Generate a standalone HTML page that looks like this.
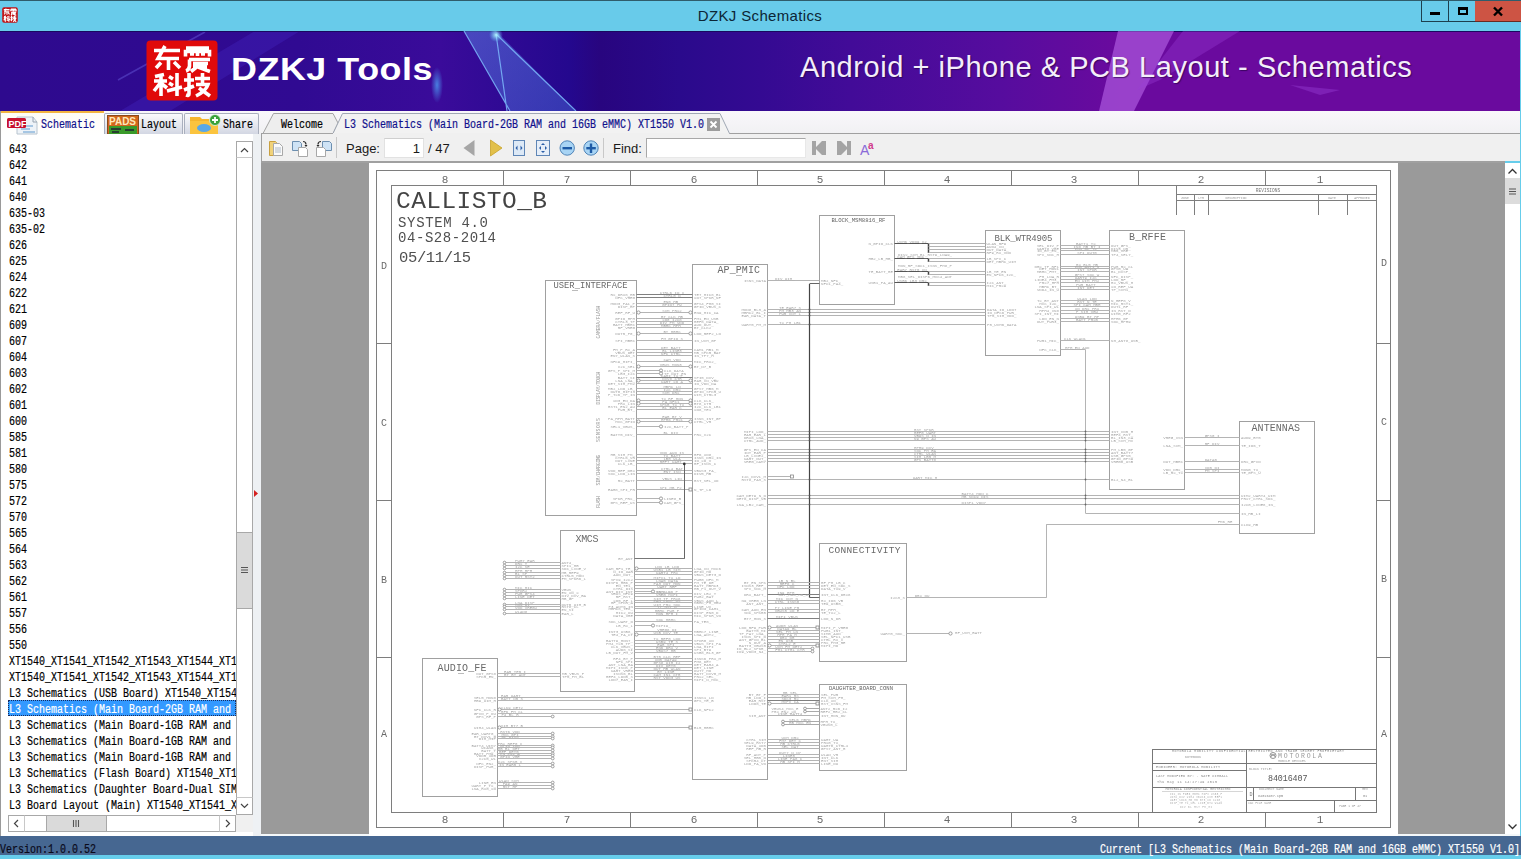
<!DOCTYPE html><html><head><meta charset="utf-8"><style>
*{margin:0;padding:0;box-sizing:border-box}
html,body{width:1521px;height:859px;overflow:hidden;background:#66cdeb;font-family:'Liberation Sans', sans-serif}
.a{position:absolute}
.mono{font-family:'Liberation Mono', monospace}
.li{position:absolute;left:9px;height:16px;line-height:16px;font-size:12px;color:#000;-webkit-text-stroke:0.2px currentColor;white-space:nowrap;font-family:'Liberation Mono', monospace;transform:scaleX(0.8333);transform-origin:0 0}
.ss{-webkit-text-stroke:0.2px currentColor;font-size:12px !important;letter-spacing:0 !important;transform:scaleX(0.8333);transform-origin:0 0}
.ssr{-webkit-text-stroke:0.2px currentColor;font-size:12px !important;letter-spacing:0 !important;transform:scaleX(0.8333);transform-origin:100% 0}
</style></head><body><div class="a" style="left:0;top:0;width:1521px;height:1px;background:#2f5c6b"></div>
<div class="a" style="left:0;top:1px;width:1521px;height:30px;background:#68cbea"></div>
<svg class="a" style="left:2px;top:7px" width="16" height="16" viewBox="0 0 72 61" preserveAspectRatio="none">
<rect x="1" y="1" width="70" height="59" rx="8" fill="#c01214"/>
<g stroke="#fff" stroke-width="5" fill="none">
<path d="M8 10.5H34M19 6L12 18.5H33M22.5 18.5V30M15 22.5L10 28M28 22L34 28"/>
<path d="M40 8H63M51.5 8V16M39.5 16.5V11.5H63.5V16.5M43 19.5H64M43.5 19.5V26Q43 30 40 31M47 23.5H62M47 27H61M52 27L64 31.5"/>
<path d="M18 34.5L9 36.5M8 41H21M15 35V56M15 42L8 51M23 36.5L27 39M23 43L27 45.5M21 51L36 47M31 33V56"/>
<path d="M38 40H48M43 33V54M38 50L48 46M49 38.5H64M56.5 33V44M50 44.5H62Q60 51 50 56M53 48L64 56"/>
</g></svg>
<div class="a" style="left:660px;top:6px;width:200px;text-align:center;font-size:15px;letter-spacing:0.35px;line-height:20px;color:#0c2636">DZKJ Schematics</div>
<div class="a" style="left:1421px;top:1px;width:28px;height:21px;border-left:1px solid #1d3f4e;border-bottom:1px solid #1d3f4e;border-right:1px solid #1d3f4e"></div>
<div class="a" style="left:1449px;top:1px;width:26px;height:21px;border-bottom:1px solid #1d3f4e"></div>
<div class="a" style="left:1430px;top:12px;width:10px;height:3px;background:#000"></div>
<div class="a" style="left:1458px;top:7px;width:10px;height:8px;border:2px solid #000;border-top-width:3px"></div>
<div class="a" style="left:1475px;top:1px;width:46px;height:21px;background:#cd5444;border-bottom:1px solid #6a2a22"></div>
<svg class="a" style="left:1492px;top:6px" width="12" height="11"><path d="M2 1.5L10 9.5M10 1.5L2 9.5" stroke="#000" stroke-width="2.4"/></svg>
<div class="a" style="left:0;top:31px;width:1520px;height:80px;overflow:hidden;
background:linear-gradient(90deg,#2e0a8e 0px,#300a92 300px,#3a0b9a 440px,#24088e 570px,#28057f 600px,#2a0a8c 680px,#340a92 760px,#420b98 850px,#560c9e 1000px,#6a0a9e 1120px,#6a0a9e 1520px)">
<svg class="a" style="left:0;top:0" width="1520" height="80" viewBox="0 31 1520 80">
<defs>
<linearGradient id="gs" x1="0" y1="0" x2="1" y2="1"><stop offset="0" stop-color="#6aa8ff" stop-opacity="0.55"/><stop offset="1" stop-color="#4f7fe8" stop-opacity="0.55"/></linearGradient>
<radialGradient id="glow"><stop offset="0" stop-color="#bff" stop-opacity="0.9"/><stop offset="1" stop-color="#6cf" stop-opacity="0"/></radialGradient>
<radialGradient id="glow2"><stop offset="0" stop-color="#4fb0ff" stop-opacity="0.7"/><stop offset="1" stop-color="#4fb0ff" stop-opacity="0"/></radialGradient>
</defs>
<polygon points="255,31 300,31 170,111 120,111" fill="#4a30d0" opacity="0.28"/>
<path d="M205 32L118 80" stroke="#6a60e0" stroke-width="1.5" opacity="0.45"/>
<polygon points="0,31 1520,31 1520,32 0,32" fill="#1a0860"/>
<polygon points="464,31 496,31 576,111 510,111" fill="url(#gs)" opacity="0.7"/>
<path d="M464 31L510 111M496 34L507 111M496 34L576 111" stroke="#7fc0ff" stroke-width="1.2" fill="none" opacity="0.8"/>
<circle cx="496" cy="35" r="7" fill="url(#glow)"/>
<ellipse cx="437" cy="85" rx="6" ry="18" fill="url(#glow2)"/>
<polygon points="1118,31 1174,31 1134,111 1099,111" fill="#c070f0" opacity="0.55"/>
<polygon points="1183,31 1240,31 1160,80 1137,90" fill="#9a40d8" opacity="0.35"/>
<polygon points="1290,85 1340,90 1320,95" fill="#9a40d8" opacity="0.4"/>
</svg>
</div>
<svg class="a" style="left:146px;top:40px" width="72" height="61" viewBox="0 0 72 61">
<rect x="0.5" y="0.5" width="71" height="60" rx="4" fill="#e00a0a"/>
<g stroke="#fff" stroke-width="3.6" fill="none" stroke-linecap="butt" stroke-linejoin="miter">
<path d="M8 10.5H34M19 6L12 18.5H33M22.5 18.5V30M15 22.5L10 28M28 22L34 28"/>
<path d="M40 8H63M51.5 8V16M39.5 16.5V11.5H63.5V16.5M44 14H48M55 14H59M43 19.5H64M43.5 19.5V26Q43 30 40 31M47 23.5H62M47 27H61M52 27L64 31.5M50 27.5L45 31.5"/>
<path d="M18 34.5L9 36.5M8 41H21M15 35V56M15 42L8 51M16 44L21 48M23 36.5L27 39M23 43L27 45.5M21 51L36 47M31 33V56"/>
<path d="M38 40H48M43 33V54Q43 56 40 55M38 50L48 46M49 38.5H64M56.5 33V44M50 44.5H62Q60 51 50 56M53 48L64 56"/>
</g>
</svg>
<div class="a" style="left:231px;top:49px;font-family:'Liberation Sans', sans-serif;font-weight:bold;font-size:32px;letter-spacing:0.5px;line-height:40px;color:#fff;white-space:nowrap;transform:scaleX(1.12);transform-origin:0 0">DZKJ Tools</div>
<div class="a" style="left:800px;top:51px;font-family:'Liberation Sans', sans-serif;font-size:29px;letter-spacing:0.55px;line-height:32px;color:#f4eefa;white-space:nowrap;text-shadow:1px 1px 1px rgba(30,0,60,0.6)">Android + iPhone &amp; PCB Layout - Schematics</div>
<div class="a" style="left:0;top:111px;width:1520px;height:23px;background:linear-gradient(#f9f7fb,#f1f1f3)"></div>
<div class="a" style="left:0;top:134px;width:261px;height:702px;background:#fff;border-left:1px solid #9a9a9a"></div>
<div class="a" style="left:1px;top:111px;width:103px;height:24px;background:linear-gradient(#fffdf6,#fff);border-top:2px solid #f3b441"></div>
<div class="a" style="left:0;top:111px;width:1px;height:725px;background:#9a9a9a"></div>
<svg class="a" style="left:6px;top:114px" width="34" height="21" viewBox="0 0 34 21">
<path d="M11 3H27L31 8V20H11Z" fill="#eef3f8" stroke="#b8c4cf" stroke-width="1"/>
<path d="M27 3V8H31" fill="none" stroke="#98a4b0"/>
<path d="M15 12H27M15 15H24M17 18H29" stroke="#8fb8dc" stroke-width="1.4"/>
<rect x="1" y="4" width="19" height="10" rx="1.5" fill="#c8102e"/>
<text x="2.5" y="12.5" font-family="Liberation Sans" font-weight="bold" font-size="9" fill="#fff">PDF</text>
</svg>
<div class="a mono ss" style="left:41px;top:117px;font-size:11px;letter-spacing:-0.55px;line-height:16px;color:#10108c;white-space:nowrap">Schematic</div>
<div class="a" style="left:104px;top:113px;width:79px;height:21px;background:linear-gradient(#fbfbfd,#d3d7e3);border:1px solid #a9afbd;border-bottom:none;border-radius:2px 2px 0 0"></div>
<svg class="a" style="left:107px;top:115px" width="32" height="19" viewBox="0 0 32 19">
<rect x="0.5" y="0.5" width="31" height="18.5" fill="#d2661c" stroke="#8a4a1a"/>
<text x="2" y="10" font-family="Liberation Sans" font-weight="bold" font-size="10" fill="#ffe8b8">PADS</text>
<rect x="2" y="11" width="28" height="8" fill="#3a9a2a"/>
<path d="M4 14H14M5 17H12M18 15H27" stroke="#223" stroke-width="1.5"/>
</svg>
<div class="a mono ss" style="left:141px;top:117px;font-size:11px;letter-spacing:-0.55px;line-height:16px;color:#000;white-space:nowrap">Layout</div>
<div class="a" style="left:184px;top:113px;width:75px;height:21px;background:linear-gradient(#fbfbfd,#d3d7e3);border:1px solid #a9afbd;border-bottom:none;border-radius:2px 2px 0 0"></div>
<svg class="a" style="left:189px;top:113px" width="34" height="21" viewBox="0 0 34 21">
<path d="M1 4H11L13 6H29V21H1Z" fill="#f5b52e"/>
<path d="M1 8H29V21H1Z" fill="#fbc43e"/>
<ellipse cx="15" cy="15" rx="7" ry="4" fill="#5aa8e6"/>
<circle cx="26" cy="7" r="5.5" fill="#3aa23a" stroke="#e8f8e8" stroke-width="0.8"/>
<path d="M26 4V10M23 7H29" stroke="#fff" stroke-width="1.8"/>
</svg>
<div class="a mono ss" style="left:223px;top:117px;font-size:11px;letter-spacing:-0.55px;line-height:16px;color:#000;white-space:nowrap">Share</div>
<svg class="a" style="left:261px;top:111px" width="1260" height="24" viewBox="261 111 1260 24">
<polygon points="263,133.5 273.5,113.5 333,113.5 338,123 333,133.5" fill="#eeeeee" stroke="#a4a4a4" stroke-width="1"/>
<polygon points="333,133.5 342.5,113.5 720,113.5 729.5,133.5" fill="#f2f2f2" stroke="#a0a8b4" stroke-width="1"/>
<line x1="729.5" y1="133.5" x2="1521" y2="133.5" stroke="#a0a0a0"/>
<line x1="261" y1="133.5" x2="263" y2="133.5" stroke="#a0a0a0"/>
<rect x="333" y="133" width="396" height="2" fill="#f0f0f0"/>
</svg>
<div class="a mono ss" style="left:281px;top:117px;font-size:11px;letter-spacing:-0.55px;line-height:16px;color:#000;white-space:nowrap">Welcome</div>
<div class="a mono ss" style="left:344px;top:117px;font-size:11px;letter-spacing:-0.55px;line-height:16px;color:#10108c;white-space:nowrap">L3 Schematics (Main Board-2GB RAM and 16GB eMMC) XT1550 V1.0</div>
<div class="a" style="left:707px;top:118px;width:13px;height:13px;background:#9c9c9c"></div>
<svg class="a" style="left:707px;top:118px" width="13" height="13"><path d="M3.5 3.5L9.5 9.5M9.5 3.5L3.5 9.5" stroke="#fff" stroke-width="1.8"/></svg>
<div class="a" style="left:261px;top:134px;width:1260px;height:27px;background:#f0f0f0;border-left:1px solid #a0a0a0"></div>
<div class="a" style="left:261px;top:161px;width:1244px;height:2px;background:#a0a0a0"></div>
<svg class="a" style="left:266px;top:137px" width="350" height="22" viewBox="266 137 350 22">
<!-- open -->
<path d="M269.5 141.5h6l1 1v13h-7z" fill="#f0d27a" stroke="#c9a040"/>
<path d="M273.5 143.5h6l3 3v9h-9z" fill="#fafafa" stroke="#a8a8a8"/>
<path d="M275 148h6M275 150h6M275 152h6" stroke="#9ab" stroke-width="0.8"/>
<!-- save as / copy -->
<path d="M292.5 141.5h7l2 2v7h-9z" fill="#cfe3f5" stroke="#6d8fb0"/>
<path d="M298.5 147.5h7l2 2v7h-9z" fill="#fff" stroke="#a8a8a8"/>
<path d="M303 141.5q3 0 3 3" fill="none" stroke="#333" stroke-width="1.2"/><path d="M304.5 145l1.5 2 1.5-2z" fill="#222"/>
<path d="M322.5 141.5h7l2 2v7h-9z" fill="#cfe3f5" stroke="#6d8fb0"/>
<path d="M316.5 147.5h7l2 2v7h-9z" fill="#fff" stroke="#a8a8a8"/>
<path d="M321 141.5q-3 0 -3 3" fill="none" stroke="#333" stroke-width="1.2"/><path d="M316.5 145l1.5 2 1.5-2z" fill="#222"/>
<line x1="336.5" y1="137" x2="336.5" y2="158" stroke="#c8c8c8"/>
</svg>
<div class="a" style="left:346px;top:141px;font-size:13px;line-height:16px;color:#1a1a1a">Page:</div>
<div class="a" style="left:384px;top:138px;width:40px;height:20px;background:#fff;border:1px solid #e2e2e2;border-top-color:#cfcfcf"></div>
<div class="a" style="left:384px;top:141px;width:36px;text-align:right;font-size:13px;line-height:16px;color:#1a1a1a">1</div>
<div class="a" style="left:428px;top:141px;font-size:13px;line-height:16px;color:#1a1a1a">/ 47</div>
<svg class="a" style="left:455px;top:136px" width="430" height="24" viewBox="455 136 430 24">
<polygon points="474.5,140 463.5,148 474.5,156" fill="#a6a6a6"/>
<polygon points="490.5,140 502,148 490.5,156" fill="#e2c04a" stroke="#c8a22a" stroke-width="0.8"/>
<rect x="513.5" y="140.5" width="11" height="15" fill="#dde9f6" stroke="#5f86b6"/>
<path d="M517.5 145.5l-2 2.5 2 2.5zM520.5 145.5l2 2.5-2 2.5z" fill="#2a5ea8"/>
<rect x="536.5" y="140.5" width="13" height="15" fill="#e6eef8" stroke="#5f86b6"/>
<path d="M543 143l-2 2h4zM543 153l-2-2h4zM539 148l2-2v4zM547 148l-2-2v4z" fill="#2a5ea8"/>
<circle cx="567.2" cy="148" r="7.2" fill="#a8d4f4" stroke="#4f84b8"/>
<rect x="562.5" y="147" width="9.5" height="2.4" fill="#1d5aa6"/>
<circle cx="591" cy="148" r="7.2" fill="#a8d4f4" stroke="#4f84b8"/>
<rect x="586.3" y="147" width="9.5" height="2.4" fill="#1d5aa6"/><rect x="589.8" y="143.5" width="2.4" height="9.5" fill="#1d5aa6"/>
<line x1="603.5" y1="138" x2="603.5" y2="158" stroke="#c8c8c8"/>
<path d="M812 141h4v6l6-6h4v14h-4l-6-6v6h-4z" fill="#a4a4a4"/>
<path d="M837 141h4l6 6v-6h4v14h-4v-6l-6 6h-4z" fill="#a4a4a4"/>
<text x="860" y="155" font-family="Liberation Sans" font-size="14" fill="#8a6ad8">A</text>
<text x="868" y="149" font-family="Liberation Sans" font-size="10" font-weight="bold" fill="#d03c8c">a</text>
</svg>
<div class="a" style="left:613px;top:141px;font-size:13px;line-height:16px;color:#1a1a1a">Find:</div>
<div class="a" style="left:646px;top:138px;width:160px;height:20px;background:#fff;border:1px solid #e8e8e8;border-top:1px solid #a8a8a8;border-left:1px solid #a8a8a8"></div>
<div class="a" style="left:261px;top:163px;width:1244px;height:671px;background:#9a9a9a"></div>
<div class="a" style="left:261px;top:834px;width:1260px;height:2px;background:#f4f8fa"></div>
<div class="a" style="left:369px;top:163px;width:1029px;height:673px;background:#fff"></div>
<div class="a" style="left:1505px;top:163px;width:15px;height:671px;background:#fff"></div>
<svg class="a" style="left:1505px;top:163px" width="15" height="671"><path d="M3.5 10.5L7.5 6.5L11.5 10.5" stroke="#333" stroke-width="1.3" fill="none"/><rect x="0" y="15" width="15" height="26" fill="#dcdcdc"/><path d="M4 26h7M4 28.5h7M4 31h7" stroke="#555" stroke-width="1.2"/><path d="M3.5 661.5L7.5 665.5L11.5 661.5" stroke="#333" stroke-width="1.3" fill="none"/></svg>
<div class="a" style="left:1520px;top:111px;width:1px;height:748px;background:#66cdeb"></div>
<div class="a" style="left:1px;top:141px;width:235px;height:674px;overflow:hidden">
<div class="li" style="left:8px;top:1px">643</div>
<div class="li" style="left:8px;top:17px">642</div>
<div class="li" style="left:8px;top:33px">641</div>
<div class="li" style="left:8px;top:49px">640</div>
<div class="li" style="left:8px;top:65px">635-03</div>
<div class="li" style="left:8px;top:81px">635-02</div>
<div class="li" style="left:8px;top:97px">626</div>
<div class="li" style="left:8px;top:113px">625</div>
<div class="li" style="left:8px;top:129px">624</div>
<div class="li" style="left:8px;top:145px">622</div>
<div class="li" style="left:8px;top:161px">621</div>
<div class="li" style="left:8px;top:177px">609</div>
<div class="li" style="left:8px;top:193px">607</div>
<div class="li" style="left:8px;top:209px">604</div>
<div class="li" style="left:8px;top:225px">603</div>
<div class="li" style="left:8px;top:241px">602</div>
<div class="li" style="left:8px;top:257px">601</div>
<div class="li" style="left:8px;top:273px">600</div>
<div class="li" style="left:8px;top:289px">585</div>
<div class="li" style="left:8px;top:305px">581</div>
<div class="li" style="left:8px;top:321px">580</div>
<div class="li" style="left:8px;top:337px">575</div>
<div class="li" style="left:8px;top:353px">572</div>
<div class="li" style="left:8px;top:369px">570</div>
<div class="li" style="left:8px;top:385px">565</div>
<div class="li" style="left:8px;top:401px">564</div>
<div class="li" style="left:8px;top:417px">563</div>
<div class="li" style="left:8px;top:433px">562</div>
<div class="li" style="left:8px;top:449px">561</div>
<div class="li" style="left:8px;top:465px">557</div>
<div class="li" style="left:8px;top:481px">556</div>
<div class="li" style="left:8px;top:497px">550</div>
<div class="li" style="left:8px;top:513px">XT1540_XT1541_XT1542_XT1543_XT1544_XT1548_XT1550</div>
<div class="li" style="left:8px;top:529px">XT1540_XT1541_XT1542_XT1543_XT1544_XT1548_XT1550</div>
<div class="li" style="left:8px;top:545px">L3 Schematics (USB Board) XT1540_XT1541_XT1542</div>
<div class="a" style="left:7px;top:559px;width:228px;height:16px;background:#3399ff;border:1px dotted #1a2a5a"></div>
<div class="li" style="left:8px;top:561px;color:#fff">L3 Schematics (Main Board-2GB RAM and 16GB eMMC) XT1550 V1.0</div>
<div class="li" style="left:8px;top:577px">L3 Schematics (Main Board-1GB RAM and 8GB eMMC)</div>
<div class="li" style="left:8px;top:593px">L3 Schematics (Main Board-1GB RAM and 8GB eMMC)</div>
<div class="li" style="left:8px;top:609px">L3 Schematics (Main Board-1GB RAM and 8GB eMMC)</div>
<div class="li" style="left:8px;top:625px">L3 Schematics (Flash Board) XT1540_XT1541</div>
<div class="li" style="left:8px;top:641px">L3 Schematics (Daughter Board-Dual SIM) XT1540</div>
<div class="li" style="left:8px;top:657px">L3 Board Layout (Main) XT1540_XT1541_XT1542</div>
</div>
<svg class="a" style="left:236px;top:141px" width="17" height="691" viewBox="236 141 17 691">
<rect x="236.5" y="141.5" width="16" height="673" fill="#fff" stroke="#a8a8a8"/>
<line x1="236.5" y1="157.5" x2="252.5" y2="157.5" stroke="#c8c8c8"/>
<path d="M241 152l3.5-3.5 3.5 3.5" stroke="#444" stroke-width="1.2" fill="none"/>
<rect x="236.5" y="532.5" width="16" height="76" fill="#dadada" stroke="#a8a8a8"/>
<path d="M241 567.5h7M241 570h7M241 572.5h7" stroke="#555" stroke-width="1.1"/>
<line x1="236.5" y1="797.5" x2="252.5" y2="797.5" stroke="#c8c8c8"/>
<path d="M241 804l3.5 3.5 3.5-3.5" stroke="#444" stroke-width="1.2" fill="none"/>
<rect x="236" y="815" width="17" height="17" fill="#f0f0f0"/>
</svg>
<svg class="a" style="left:7px;top:815px" width="230" height="18" viewBox="7 815 230 18">
<rect x="8.5" y="815.5" width="227" height="16" fill="#fff" stroke="#a8a8a8"/>
<line x1="24.5" y1="815.5" x2="24.5" y2="831.5" stroke="#c8c8c8"/>
<path d="M18 820l-3.5 3.5 3.5 3.5" stroke="#444" stroke-width="1.2" fill="none"/>
<rect x="46.5" y="815.5" width="60" height="16" fill="#dadada" stroke="#a8a8a8"/>
<path d="M73.5 820v7M76 820v7M78.5 820v7" stroke="#555" stroke-width="1.1"/>
<line x1="219.5" y1="815.5" x2="219.5" y2="831.5" stroke="#c8c8c8"/>
<path d="M226 820l3.5 3.5-3.5 3.5" stroke="#444" stroke-width="1.2" fill="none"/>
</svg>
<div class="a" style="left:253px;top:134px;width:8px;height:702px;background:#eef1f4"></div>
<svg class="a" style="left:253px;top:488px" width="8" height="12"><polygon points="1,2 5,5.5 1,9" fill="#d42020"/></svg>
<div class="a" style="left:0;top:836px;width:1521px;height:19px;background:#466791"></div>
<div class="a" style="left:0;top:855px;width:1521px;height:4px;background:#66cdeb"></div>
<div class="a mono ss" style="left:0;top:842px;font-size:11px;letter-spacing:-0.55px;line-height:16px;color:#0a0a1a;white-space:nowrap">Version:1.0.0.52</div>
<div class="a mono ssr" style="right:1px;top:842px;font-size:11px;letter-spacing:-0.55px;line-height:16px;color:#fff;white-space:nowrap">Current [L3 Schematics (Main Board-2GB RAM and 16GB eMMC) XT1550 V1.0]</div>
<svg class="a" style="left:369px;top:163px;will-change:transform" width="1029" height="673" viewBox="369 163 1029 673" font-family="Liberation Mono, monospace">
<rect x="376.5" y="170.5" width="1014" height="657" fill="none" stroke="#7e7e7e"/>
<rect x="391.5" y="185.5" width="985" height="627" fill="none" stroke="#7e7e7e"/>
<line x1="503.5" y1="170.5" x2="503.5" y2="185.5" stroke="#7e7e7e" stroke-width="1"/>
<line x1="503.5" y1="812.5" x2="503.5" y2="827.5" stroke="#7e7e7e" stroke-width="1"/>
<line x1="630.5" y1="170.5" x2="630.5" y2="185.5" stroke="#7e7e7e" stroke-width="1"/>
<line x1="630.5" y1="812.5" x2="630.5" y2="827.5" stroke="#7e7e7e" stroke-width="1"/>
<line x1="757.5" y1="170.5" x2="757.5" y2="185.5" stroke="#7e7e7e" stroke-width="1"/>
<line x1="757.5" y1="812.5" x2="757.5" y2="827.5" stroke="#7e7e7e" stroke-width="1"/>
<line x1="884.5" y1="170.5" x2="884.5" y2="185.5" stroke="#7e7e7e" stroke-width="1"/>
<line x1="884.5" y1="812.5" x2="884.5" y2="827.5" stroke="#7e7e7e" stroke-width="1"/>
<line x1="1011.5" y1="170.5" x2="1011.5" y2="185.5" stroke="#7e7e7e" stroke-width="1"/>
<line x1="1011.5" y1="812.5" x2="1011.5" y2="827.5" stroke="#7e7e7e" stroke-width="1"/>
<line x1="1138.5" y1="170.5" x2="1138.5" y2="185.5" stroke="#7e7e7e" stroke-width="1"/>
<line x1="1138.5" y1="812.5" x2="1138.5" y2="827.5" stroke="#7e7e7e" stroke-width="1"/>
<line x1="1265.5" y1="170.5" x2="1265.5" y2="185.5" stroke="#7e7e7e" stroke-width="1"/>
<line x1="1265.5" y1="812.5" x2="1265.5" y2="827.5" stroke="#7e7e7e" stroke-width="1"/>
<line x1="376.5" y1="343.5" x2="391.5" y2="343.5" stroke="#7e7e7e" stroke-width="1"/>
<line x1="1376.5" y1="343.5" x2="1390.5" y2="343.5" stroke="#7e7e7e" stroke-width="1"/>
<line x1="376.5" y1="500.5" x2="391.5" y2="500.5" stroke="#7e7e7e" stroke-width="1"/>
<line x1="1376.5" y1="500.5" x2="1390.5" y2="500.5" stroke="#7e7e7e" stroke-width="1"/>
<line x1="376.5" y1="657.5" x2="391.5" y2="657.5" stroke="#7e7e7e" stroke-width="1"/>
<line x1="1376.5" y1="657.5" x2="1390.5" y2="657.5" stroke="#7e7e7e" stroke-width="1"/>
<text x="445" y="183" font-size="11" fill="#6a6a6a" text-anchor="middle" >8</text>
<text x="445" y="823" font-size="11" fill="#6a6a6a" text-anchor="middle" >8</text>
<text x="567" y="183" font-size="11" fill="#6a6a6a" text-anchor="middle" >7</text>
<text x="567" y="823" font-size="11" fill="#6a6a6a" text-anchor="middle" >7</text>
<text x="694" y="183" font-size="11" fill="#6a6a6a" text-anchor="middle" >6</text>
<text x="694" y="823" font-size="11" fill="#6a6a6a" text-anchor="middle" >6</text>
<text x="820" y="183" font-size="11" fill="#6a6a6a" text-anchor="middle" >5</text>
<text x="820" y="823" font-size="11" fill="#6a6a6a" text-anchor="middle" >5</text>
<text x="947" y="183" font-size="11" fill="#6a6a6a" text-anchor="middle" >4</text>
<text x="947" y="823" font-size="11" fill="#6a6a6a" text-anchor="middle" >4</text>
<text x="1074" y="183" font-size="11" fill="#6a6a6a" text-anchor="middle" >3</text>
<text x="1074" y="823" font-size="11" fill="#6a6a6a" text-anchor="middle" >3</text>
<text x="1201" y="183" font-size="11" fill="#6a6a6a" text-anchor="middle" >2</text>
<text x="1201" y="823" font-size="11" fill="#6a6a6a" text-anchor="middle" >2</text>
<text x="1320" y="183" font-size="11" fill="#6a6a6a" text-anchor="middle" >1</text>
<text x="1320" y="823" font-size="11" fill="#6a6a6a" text-anchor="middle" >1</text>
<text x="384" y="269" font-size="10" fill="#6a6a6a" text-anchor="middle" >D</text>
<text x="1384" y="266" font-size="10" fill="#6a6a6a" text-anchor="middle" >D</text>
<text x="384" y="426" font-size="10" fill="#6a6a6a" text-anchor="middle" >C</text>
<text x="1384" y="425" font-size="10" fill="#6a6a6a" text-anchor="middle" >C</text>
<text x="384" y="583" font-size="10" fill="#6a6a6a" text-anchor="middle" >B</text>
<text x="1384" y="582" font-size="10" fill="#6a6a6a" text-anchor="middle" >B</text>
<text x="384" y="737" font-size="10" fill="#6a6a6a" text-anchor="middle" >A</text>
<text x="1384" y="737" font-size="10" fill="#6a6a6a" text-anchor="middle" >A</text>
<text x="396" y="208" font-size="24.5" fill="#444" text-anchor="start" textLength="151">CALLISTO_B</text>
<text x="398" y="227" font-size="14" fill="#505050" text-anchor="start" textLength="90">SYSTEM 4.0</text>
<text x="398" y="242" font-size="14" fill="#505050" text-anchor="start" textLength="98">04-S28-2014</text>
<text x="399" y="262" font-size="15.5" fill="#505050" text-anchor="start" textLength="72">05/11/15</text>
<line x1="1176.5" y1="185.5" x2="1376.5" y2="185.5" stroke="#7e7e7e" stroke-width="1"/>
<line x1="1176.5" y1="185.5" x2="1176.5" y2="215" stroke="#7e7e7e" stroke-width="1"/>
<line x1="1176.5" y1="194.5" x2="1376.5" y2="194.5" stroke="#7e7e7e" stroke-width="1"/>
<line x1="1176.5" y1="200.5" x2="1376.5" y2="200.5" stroke="#7e7e7e" stroke-width="1"/>
<line x1="1194.5" y1="194.5" x2="1194.5" y2="215" stroke="#7e7e7e" stroke-width="1"/>
<line x1="1208.5" y1="194.5" x2="1208.5" y2="215" stroke="#7e7e7e" stroke-width="1"/>
<line x1="1318.5" y1="194.5" x2="1318.5" y2="215" stroke="#7e7e7e" stroke-width="1"/>
<line x1="1347.5" y1="194.5" x2="1347.5" y2="215" stroke="#7e7e7e" stroke-width="1"/>
<text x="1268" y="192" font-size="4.5" fill="#777" text-anchor="middle" >REVISIONS</text>
<text x="1185" y="199" font-size="3.2" fill="#999" text-anchor="middle" >ZONE</text>
<text x="1201" y="199" font-size="3.2" fill="#999" text-anchor="middle" >LTR</text>
<text x="1236" y="199" font-size="3.2" fill="#999" text-anchor="middle" >DESCRIPTION</text>
<text x="1332" y="199" font-size="3.2" fill="#999" text-anchor="middle" >DATE</text>
<text x="1362" y="199" font-size="3.2" fill="#999" text-anchor="middle" >APPROVED</text>
<rect x="545.5" y="280.5" width="91" height="235" fill="none" stroke="#a0a0a0"/>
<text x="553.5" y="288" font-size="8.8" fill="#6a6a6a" text-anchor="start" textLength="74">USER_INTERFACE</text>
<rect x="692.5" y="264.5" width="75" height="515" fill="none" stroke="#a0a0a0"/>
<text x="717.5" y="273" font-size="10" fill="#6a6a6a" text-anchor="start" textLength="42.5">AP_PMIC</text>
<rect x="819.5" y="215.5" width="75" height="89" fill="none" stroke="#a0a0a0"/>
<text x="831.5" y="222" font-size="5.7" fill="#666" text-anchor="start" textLength="54">BLOCK_MSM8816_RF</text>
<rect x="985.5" y="230.5" width="75" height="125" fill="none" stroke="#a0a0a0"/>
<text x="994.5" y="241" font-size="9" fill="#6a6a6a" text-anchor="start" textLength="58">BLK_WTR4905</text>
<rect x="1109.5" y="230.5" width="75" height="259" fill="none" stroke="#a0a0a0"/>
<text x="1129" y="239.5" font-size="10" fill="#6a6a6a" text-anchor="start" textLength="37">B_RFFE</text>
<rect x="1239.5" y="421.5" width="75" height="112" fill="none" stroke="#a0a0a0"/>
<text x="1251.5" y="431.2" font-size="10" fill="#6a6a6a" text-anchor="start" textLength="48.5">ANTENNAS</text>
<rect x="560.5" y="530.5" width="74" height="161" fill="none" stroke="#a0a0a0"/>
<text x="575.5" y="541.5" font-size="10" fill="#6a6a6a" text-anchor="start" textLength="23">XMCS</text>
<rect x="422.5" y="658.5" width="75" height="138" fill="none" stroke="#a0a0a0"/>
<text x="437.5" y="671.2" font-size="10" fill="#6a6a6a" text-anchor="start" textLength="49">AUDIO_FE</text>
<rect x="819.5" y="543.5" width="87" height="118" fill="none" stroke="#a0a0a0"/>
<text x="828.5" y="553.2" font-size="9.5" fill="#6a6a6a" text-anchor="start" textLength="72">CONNECTIVITY</text>
<rect x="819.5" y="684.5" width="87" height="86" fill="none" stroke="#a0a0a0"/>
<text x="829" y="690" font-size="5.6" fill="#666" text-anchor="start" textLength="64">DAUGHTER_BOARD_CONN</text>
<line x1="572" y1="290.5" x2="578" y2="290.5" stroke="#bbb" stroke-width="1"/>
<line x1="736" y1="275.5" x2="742" y2="275.5" stroke="#bbb" stroke-width="1"/>
<line x1="458" y1="673.5" x2="464" y2="673.5" stroke="#bbb" stroke-width="1"/>
<text x="0" y="0" font-size="4.8" fill="#999" text-anchor="middle" textLength="33" transform="translate(600,322) rotate(-90)">CAMERA/FLASH</text>
<text x="0" y="0" font-size="4.8" fill="#999" text-anchor="middle" textLength="33" transform="translate(600,388) rotate(-90)">DISPLAY/TOUCH</text>
<text x="0" y="0" font-size="4.8" fill="#999" text-anchor="middle" textLength="24" transform="translate(600,430) rotate(-90)">SENSORS</text>
<text x="0" y="0" font-size="4.8" fill="#999" text-anchor="middle" textLength="31" transform="translate(600,470) rotate(-90)">SIM/CHARGING</text>
<text x="0" y="0" font-size="4.8" fill="#999" text-anchor="middle" textLength="12" transform="translate(600,502) rotate(-90)">FLASH</text>
<line x1="636.5" y1="294.5" x2="692.5" y2="294.5" stroke="#808080" stroke-width="1.1"/>
<text x="635.0" y="295.7" font-size="4.1" fill="#a6a6a6" text-anchor="end" >RX_DRX8_HB</text>
<text x="694.0" y="295.7" font-size="4.1" fill="#a6a6a6" text-anchor="start" >TE7_MIC8_BL</text>
<text x="672" y="293.7" font-size="4.1" fill="#a6a6a6" text-anchor="middle" >CTRL6_IO_I</text>
<line x1="636.5" y1="297.5" x2="692.5" y2="297.5" stroke="#808080" stroke-width="1.1"/>
<text x="635.0" y="298.7" font-size="4.1" fill="#a6a6a6" text-anchor="end" >NFC_VREG</text>
<text x="694.0" y="298.7" font-size="4.1" fill="#a6a6a6" text-anchor="start" >XO7_SPKR_NF</text>
<text x="672" y="296.7" font-size="4.1" fill="#a6a6a6" text-anchor="middle" >CTRL0_D</text>
<line x1="636.5" y1="303.5" x2="692.5" y2="303.5" stroke="#b4b4b4" stroke-width="1"/>
<text x="635.0" y="304.7" font-size="4.1" fill="#a6a6a6" text-anchor="end" >MON3_PA1_P</text>
<text x="694.0" y="304.7" font-size="4.1" fill="#a6a6a6" text-anchor="start" >GPS4_FM0_SI</text>
<text x="672" y="302.7" font-size="4.1" fill="#a6a6a6" text-anchor="middle" >EN0_HB_</text>
<line x1="636.5" y1="306.5" x2="692.5" y2="306.5" stroke="#b4b4b4" stroke-width="1"/>
<text x="635.0" y="307.7" font-size="4.1" fill="#a6a6a6" text-anchor="end" >DISP_HP</text>
<text x="694.0" y="307.7" font-size="4.1" fill="#a6a6a6" text-anchor="start" >GPIO_VBUS_C</text>
<text x="672" y="305.7" font-size="4.1" fill="#a6a6a6" text-anchor="middle" >GPIO7_PW</text>
<line x1="636.5" y1="312.5" x2="692.5" y2="312.5" stroke="#b4b4b4" stroke-width="1"/>
<text x="635.0" y="313.7" font-size="4.1" fill="#a6a6a6" text-anchor="end" >REF_RF_U</text>
<text x="694.0" y="313.7" font-size="4.1" fill="#a6a6a6" text-anchor="start" >EN9_MIC_CA</text>
<text x="672" y="311.7" font-size="4.1" fill="#a6a6a6" text-anchor="middle" >SIM_PRX2</text>
<circle cx="638.5" cy="312.5" r="1.6" fill="#fff" stroke="#888" stroke-width="0.8"/>
<circle cx="690.5" cy="312.5" r="1.6" fill="#fff" stroke="#888" stroke-width="0.8"/>
<line x1="636.5" y1="318.5" x2="692.5" y2="318.5" stroke="#b4b4b4" stroke-width="1"/>
<text x="635.0" y="319.7" font-size="4.1" fill="#a6a6a6" text-anchor="end" >GPIO_HPH</text>
<text x="694.0" y="319.7" font-size="4.1" fill="#a6a6a6" text-anchor="start" >FM1_EN_USB</text>
<text x="672" y="317.7" font-size="4.1" fill="#a6a6a6" text-anchor="middle" >BT_CLK_HB</text>
<line x1="636.5" y1="321.5" x2="692.5" y2="321.5" stroke="#b4b4b4" stroke-width="1"/>
<text x="635.0" y="322.7" font-size="4.1" fill="#a6a6a6" text-anchor="end" >CTRL3_TP</text>
<text x="694.0" y="322.7" font-size="4.1" fill="#a6a6a6" text-anchor="start" >REF8_DATA_</text>
<text x="672" y="320.7" font-size="4.1" fill="#a6a6a6" text-anchor="middle" >XO0_I2C8</text>
<line x1="636.5" y1="324.5" x2="692.5" y2="324.5" stroke="#b4b4b4" stroke-width="1"/>
<text x="635.0" y="325.7" font-size="4.1" fill="#a6a6a6" text-anchor="end" >BATT_MBHC</text>
<text x="694.0" y="325.7" font-size="4.1" fill="#a6a6a6" text-anchor="start" >AUD_OUT_</text>
<text x="672" y="323.7" font-size="4.1" fill="#a6a6a6" text-anchor="middle" >DIV_PM_VDD</text>
<line x1="636.5" y1="327.5" x2="692.5" y2="327.5" stroke="#b4b4b4" stroke-width="1"/>
<text x="635.0" y="328.7" font-size="4.1" fill="#a6a6a6" text-anchor="end" >RF_VREG</text>
<text x="694.0" y="328.7" font-size="4.1" fill="#a6a6a6" text-anchor="start" >BT_CLK2</text>
<text x="672" y="326.7" font-size="4.1" fill="#a6a6a6" text-anchor="middle" >MBHC_HPH_</text>
<line x1="636.5" y1="333.5" x2="692.5" y2="333.5" stroke="#b4b4b4" stroke-width="1"/>
<text x="635.0" y="334.7" font-size="4.1" fill="#a6a6a6" text-anchor="end" >OUT5_P0_</text>
<text x="694.0" y="334.7" font-size="4.1" fill="#a6a6a6" text-anchor="start" >LDO_REF2_LD</text>
<text x="672" y="332.7" font-size="4.1" fill="#a6a6a6" text-anchor="middle" >BT_MBHC</text>
<circle cx="638.5" cy="333.5" r="1.6" fill="#fff" stroke="#888" stroke-width="0.8"/>
<circle cx="690.5" cy="333.5" r="1.6" fill="#fff" stroke="#888" stroke-width="0.8"/>
<line x1="636.5" y1="340.5" x2="692.5" y2="340.5" stroke="#b4b4b4" stroke-width="1"/>
<text x="635.0" y="341.7" font-size="4.1" fill="#a6a6a6" text-anchor="end" >SPI_MBHC</text>
<text x="694.0" y="341.7" font-size="4.1" fill="#a6a6a6" text-anchor="start" >IN_UIM_GP</text>
<text x="672" y="339.7" font-size="4.1" fill="#a6a6a6" text-anchor="middle" >FM_GPIO_S</text>
<line x1="636.5" y1="349.5" x2="692.5" y2="349.5" stroke="#b4b4b4" stroke-width="1"/>
<text x="635.0" y="350.7" font-size="4.1" fill="#a6a6a6" text-anchor="end" >FM_P_RX_A</text>
<text x="694.0" y="350.7" font-size="4.1" fill="#a6a6a6" text-anchor="start" >CAM1_HB1_M</text>
<text x="672" y="348.7" font-size="4.1" fill="#a6a6a6" text-anchor="middle" >DET_BATT_</text>
<line x1="636.5" y1="352.5" x2="692.5" y2="352.5" stroke="#b4b4b4" stroke-width="1"/>
<text x="635.0" y="353.7" font-size="4.1" fill="#a6a6a6" text-anchor="end" >VBUS_DET</text>
<text x="694.0" y="353.7" font-size="4.1" fill="#a6a6a6" text-anchor="start" >MB_SPKR_BAT</text>
<text x="672" y="351.7" font-size="4.1" fill="#a6a6a6" text-anchor="middle" >BL_LINE3</text>
<line x1="636.5" y1="355.5" x2="692.5" y2="355.5" stroke="#b4b4b4" stroke-width="1"/>
<text x="635.0" y="356.7" font-size="4.1" fill="#a6a6a6" text-anchor="end" >EN7_WLAN_S</text>
<text x="694.0" y="356.7" font-size="4.1" fill="#a6a6a6" text-anchor="start" >IN_TP7_H</text>
<text x="672" y="354.7" font-size="4.1" fill="#a6a6a6" text-anchor="middle" >NFC_CTRL_</text>
<line x1="636.5" y1="361.5" x2="692.5" y2="361.5" stroke="#b4b4b4" stroke-width="1"/>
<text x="635.0" y="362.7" font-size="4.1" fill="#a6a6a6" text-anchor="end" >NFC9_MIPI_</text>
<text x="694.0" y="362.7" font-size="4.1" fill="#a6a6a6" text-anchor="start" >MIC_PRX2_</text>
<text x="672" y="360.7" font-size="4.1" fill="#a6a6a6" text-anchor="middle" >CAM_VDD</text>
<line x1="636.5" y1="366.5" x2="692.5" y2="366.5" stroke="#b4b4b4" stroke-width="1"/>
<text x="635.0" y="367.7" font-size="4.1" fill="#a6a6a6" text-anchor="end" >I2C_SEL</text>
<text x="694.0" y="367.7" font-size="4.1" fill="#a6a6a6" text-anchor="start" >BT_N7_B</text>
<text x="672" y="365.7" font-size="4.1" fill="#a6a6a6" text-anchor="middle" >VBUS_MON3_</text>
<circle cx="638.5" cy="366.5" r="1.6" fill="#fff" stroke="#888" stroke-width="0.8"/>
<circle cx="690.5" cy="366.5" r="1.6" fill="#fff" stroke="#888" stroke-width="0.8"/>
<line x1="636.5" y1="370.5" x2="660" y2="370.5" stroke="#b4b4b4" stroke-width="1"/>
<text x="635.0" y="371.7" font-size="4.1" fill="#a6a6a6" text-anchor="end" >GPS_P_SPI_M</text>
<circle cx="661" cy="370.5" r="1.6" fill="#fff" stroke="#888" stroke-width="0.8"/>
<text x="664" y="371.7" font-size="4.1" fill="#a6a6a6" text-anchor="start" >CLK_DATA</text>
<line x1="636.5" y1="373.5" x2="660" y2="373.5" stroke="#b4b4b4" stroke-width="1"/>
<text x="635.0" y="374.7" font-size="4.1" fill="#a6a6a6" text-anchor="end" >LB3_I2C</text>
<circle cx="661" cy="373.5" r="1.6" fill="#fff" stroke="#888" stroke-width="0.8"/>
<text x="664" y="374.7" font-size="4.1" fill="#a6a6a6" text-anchor="start" >TP_OUT_EN</text>
<line x1="636.5" y1="377.5" x2="692.5" y2="377.5" stroke="#808080" stroke-width="1.1"/>
<text x="635.0" y="378.7" font-size="4.1" fill="#a6a6a6" text-anchor="end" >BATT_SI</text>
<text x="694.0" y="378.7" font-size="4.1" fill="#a6a6a6" text-anchor="start" >SPI5_DIV_</text>
<text x="672" y="376.7" font-size="4.1" fill="#a6a6a6" text-anchor="middle" >CAM1_TX_P</text>
<line x1="636.5" y1="380.5" x2="692.5" y2="380.5" stroke="#b4b4b4" stroke-width="1"/>
<text x="635.0" y="381.7" font-size="4.1" fill="#a6a6a6" text-anchor="end" >LNA_LNA_</text>
<text x="694.0" y="381.7" font-size="4.1" fill="#a6a6a6" text-anchor="start" >EAR_IN_VBU</text>
<text x="672" y="379.7" font-size="4.1" fill="#a6a6a6" text-anchor="middle" >DIV8_CTR</text>
<circle cx="638.5" cy="380.5" r="1.6" fill="#fff" stroke="#888" stroke-width="0.8"/>
<circle cx="690.5" cy="380.5" r="1.6" fill="#fff" stroke="#888" stroke-width="0.8"/>
<line x1="636.5" y1="383.5" x2="692.5" y2="383.5" stroke="#b4b4b4" stroke-width="1"/>
<text x="635.0" y="384.7" font-size="4.1" fill="#a6a6a6" text-anchor="end" >DET_SIM_PM2</text>
<text x="694.0" y="384.7" font-size="4.1" fill="#a6a6a6" text-anchor="start" >IO_VDD_DA</text>
<text x="672" y="382.7" font-size="4.1" fill="#a6a6a6" text-anchor="middle" >UART_XO_A</text>
<line x1="636.5" y1="388.5" x2="692.5" y2="388.5" stroke="#b4b4b4" stroke-width="1"/>
<text x="635.0" y="389.7" font-size="4.1" fill="#a6a6a6" text-anchor="end" >MB2_LDO_LB_</text>
<text x="694.0" y="389.7" font-size="4.1" fill="#a6a6a6" text-anchor="start" >GPS7_MB6_M</text>
<text x="672" y="387.7" font-size="4.1" fill="#a6a6a6" text-anchor="middle" >MBHC_LN</text>
<line x1="636.5" y1="391.5" x2="692.5" y2="391.5" stroke="#b4b4b4" stroke-width="1"/>
<text x="635.0" y="392.7" font-size="4.1" fill="#a6a6a6" text-anchor="end" >OUT0_MIPI3</text>
<text x="694.0" y="392.7" font-size="4.1" fill="#a6a6a6" text-anchor="start" >GPIO_SPKR_U</text>
<text x="672" y="390.7" font-size="4.1" fill="#a6a6a6" text-anchor="middle" >I2C_DRX</text>
<line x1="636.5" y1="394.5" x2="692.5" y2="394.5" stroke="#b4b4b4" stroke-width="1"/>
<text x="635.0" y="395.7" font-size="4.1" fill="#a6a6a6" text-anchor="end" >P_TX6_TP_IN</text>
<text x="694.0" y="395.7" font-size="4.1" fill="#a6a6a6" text-anchor="start" >UIM_CTRL3</text>
<text x="672" y="393.7" font-size="4.1" fill="#a6a6a6" text-anchor="middle" >SIM_DRX_</text>
<line x1="636.5" y1="400.5" x2="692.5" y2="400.5" stroke="#b4b4b4" stroke-width="1"/>
<text x="635.0" y="401.7" font-size="4.1" fill="#a6a6a6" text-anchor="end" >XO3_EN_DA</text>
<text x="694.0" y="401.7" font-size="4.1" fill="#a6a6a6" text-anchor="start" >CLK_CLK_</text>
<text x="672" y="399.7" font-size="4.1" fill="#a6a6a6" text-anchor="middle" >TX_RF_MON</text>
<circle cx="638.5" cy="400.5" r="1.6" fill="#fff" stroke="#888" stroke-width="0.8"/>
<circle cx="690.5" cy="400.5" r="1.6" fill="#fff" stroke="#888" stroke-width="0.8"/>
<line x1="636.5" y1="403.5" x2="692.5" y2="403.5" stroke="#b4b4b4" stroke-width="1"/>
<text x="635.0" y="404.7" font-size="4.1" fill="#a6a6a6" text-anchor="end" >PRX_LIN</text>
<text x="694.0" y="404.7" font-size="4.1" fill="#a6a6a6" text-anchor="start" >BT8_CTR</text>
<text x="672" y="402.7" font-size="4.1" fill="#a6a6a6" text-anchor="middle" >PA_NFC1_</text>
<circle cx="638.5" cy="403.5" r="1.6" fill="#fff" stroke="#888" stroke-width="0.8"/>
<circle cx="690.5" cy="403.5" r="1.6" fill="#fff" stroke="#888" stroke-width="0.8"/>
<line x1="636.5" y1="406.5" x2="692.5" y2="406.5" stroke="#b4b4b4" stroke-width="1"/>
<text x="635.0" y="407.7" font-size="4.1" fill="#a6a6a6" text-anchor="end" >RST1_EN2_AU</text>
<text x="694.0" y="407.7" font-size="4.1" fill="#a6a6a6" text-anchor="start" >I2C_CLK_LB1</text>
<text x="672" y="405.7" font-size="4.1" fill="#a6a6a6" text-anchor="middle" >SPKR_TX_TX</text>
<line x1="636.5" y1="409.5" x2="692.5" y2="409.5" stroke="#b4b4b4" stroke-width="1"/>
<text x="635.0" y="410.7" font-size="4.1" fill="#a6a6a6" text-anchor="end" >PWR_BT_</text>
<text x="694.0" y="410.7" font-size="4.1" fill="#a6a6a6" text-anchor="start" >XO8_TE1</text>
<text x="672" y="408.7" font-size="4.1" fill="#a6a6a6" text-anchor="middle" >BL_EAR_C</text>
<line x1="636.5" y1="418.5" x2="692.5" y2="418.5" stroke="#b4b4b4" stroke-width="1"/>
<text x="635.0" y="419.7" font-size="4.1" fill="#a6a6a6" text-anchor="end" >PA_HPH_BATT</text>
<text x="694.0" y="419.7" font-size="4.1" fill="#a6a6a6" text-anchor="start" >ISNS_INT_GP</text>
<text x="672" y="417.7" font-size="4.1" fill="#a6a6a6" text-anchor="middle" >EAR_BT_V</text>
<line x1="636.5" y1="421.5" x2="692.5" y2="421.5" stroke="#b4b4b4" stroke-width="1"/>
<text x="635.0" y="422.7" font-size="4.1" fill="#a6a6a6" text-anchor="end" >MIC_GPIO</text>
<text x="694.0" y="422.7" font-size="4.1" fill="#a6a6a6" text-anchor="start" >CTRL_VR</text>
<text x="672" y="420.7" font-size="4.1" fill="#a6a6a6" text-anchor="middle" >HPH6_PRX1</text>
<circle cx="638.5" cy="421.5" r="1.6" fill="#fff" stroke="#888" stroke-width="0.8"/>
<circle cx="690.5" cy="421.5" r="1.6" fill="#fff" stroke="#888" stroke-width="0.8"/>
<line x1="636.5" y1="426.5" x2="660" y2="426.5" stroke="#b4b4b4" stroke-width="1"/>
<text x="635.0" y="427.7" font-size="4.1" fill="#a6a6a6" text-anchor="end" >SEL1_VBUS_</text>
<circle cx="661" cy="426.5" r="1.6" fill="#fff" stroke="#888" stroke-width="0.8"/>
<text x="664" y="427.7" font-size="4.1" fill="#a6a6a6" text-anchor="start" >I2C_BATT_P</text>
<line x1="636.5" y1="434.5" x2="692.5" y2="434.5" stroke="#b4b4b4" stroke-width="1"/>
<text x="635.0" y="435.7" font-size="4.1" fill="#a6a6a6" text-anchor="end" >BATT5_DIV_</text>
<text x="694.0" y="435.7" font-size="4.1" fill="#a6a6a6" text-anchor="start" >PRX_I2C</text>
<text x="672" y="433.7" font-size="4.1" fill="#a6a6a6" text-anchor="middle" >BL_DIV_</text>
<line x1="636.5" y1="454.5" x2="692.5" y2="454.5" stroke="#b4b4b4" stroke-width="1"/>
<text x="635.0" y="455.7" font-size="4.1" fill="#a6a6a6" text-anchor="end" >HB_SIM_PM_</text>
<text x="694.0" y="455.7" font-size="4.1" fill="#a6a6a6" text-anchor="start" >RF6_XO8_</text>
<text x="672" y="453.7" font-size="4.1" fill="#a6a6a6" text-anchor="middle" >VDD_AUD_IS</text>
<line x1="636.5" y1="457.5" x2="692.5" y2="457.5" stroke="#b4b4b4" stroke-width="1"/>
<text x="635.0" y="458.7" font-size="4.1" fill="#a6a6a6" text-anchor="end" >CTRL6_VR</text>
<text x="694.0" y="458.7" font-size="4.1" fill="#a6a6a6" text-anchor="start" >ISNS_DRX_IN</text>
<text x="672" y="456.7" font-size="4.1" fill="#a6a6a6" text-anchor="middle" >TX_BATT</text>
<line x1="636.5" y1="460.5" x2="692.5" y2="460.5" stroke="#b4b4b4" stroke-width="1"/>
<text x="635.0" y="461.7" font-size="4.1" fill="#a6a6a6" text-anchor="end" >OUT_LINE</text>
<text x="694.0" y="461.7" font-size="4.1" fill="#a6a6a6" text-anchor="start" >IO_XO_V</text>
<text x="672" y="459.7" font-size="4.1" fill="#a6a6a6" text-anchor="middle" >LB0_WLA</text>
<line x1="636.5" y1="463.5" x2="692.5" y2="463.5" stroke="#b4b4b4" stroke-width="1"/>
<text x="635.0" y="464.7" font-size="4.1" fill="#a6a6a6" text-anchor="end" >CLK_LB_</text>
<text x="694.0" y="464.7" font-size="4.1" fill="#a6a6a6" text-anchor="start" >RF_ISNS_C</text>
<text x="672" y="462.7" font-size="4.1" fill="#a6a6a6" text-anchor="middle" >REF7_UART_</text>
<line x1="636.5" y1="470.5" x2="692.5" y2="470.5" stroke="#b4b4b4" stroke-width="1"/>
<text x="635.0" y="471.7" font-size="4.1" fill="#a6a6a6" text-anchor="end" >VDD_REF_DRX</text>
<text x="694.0" y="471.7" font-size="4.1" fill="#a6a6a6" text-anchor="start" >VBUS3_PA_</text>
<text x="672" y="469.7" font-size="4.1" fill="#a6a6a6" text-anchor="middle" >CTRL4_BAT</text>
<line x1="636.5" y1="473.5" x2="692.5" y2="473.5" stroke="#b4b4b4" stroke-width="1"/>
<text x="635.0" y="474.7" font-size="4.1" fill="#a6a6a6" text-anchor="end" >SDC_LDO_LIN</text>
<text x="694.0" y="474.7" font-size="4.1" fill="#a6a6a6" text-anchor="start" >DIV5_HB</text>
<text x="672" y="472.7" font-size="4.1" fill="#a6a6a6" text-anchor="middle" >EN7_ISN</text>
<line x1="636.5" y1="480.5" x2="692.5" y2="480.5" stroke="#b4b4b4" stroke-width="1"/>
<text x="635.0" y="481.7" font-size="4.1" fill="#a6a6a6" text-anchor="end" >RX_BATT</text>
<text x="694.0" y="481.7" font-size="4.1" fill="#a6a6a6" text-anchor="start" >RST_SEL_XO</text>
<text x="672" y="479.7" font-size="4.1" fill="#a6a6a6" text-anchor="middle" >VBUS_LIN</text>
<line x1="636.5" y1="489.5" x2="692.5" y2="489.5" stroke="#b4b4b4" stroke-width="1"/>
<text x="635.0" y="490.7" font-size="4.1" fill="#a6a6a6" text-anchor="end" >EAR8_SPI_PR</text>
<text x="694.0" y="490.7" font-size="4.1" fill="#a6a6a6" text-anchor="start" >N_TP_LD</text>
<text x="672" y="488.7" font-size="4.1" fill="#a6a6a6" text-anchor="middle" >SPI_MB_P2_</text>
<rect x="689.0" y="488.0" width="3" height="3" fill="#fff" stroke="#888" stroke-width="0.8"/>
<line x1="636.5" y1="498.5" x2="660" y2="498.5" stroke="#b4b4b4" stroke-width="1"/>
<text x="635.0" y="499.7" font-size="4.1" fill="#a6a6a6" text-anchor="end" >SPKR_PRX_</text>
<circle cx="661" cy="498.5" r="1.6" fill="#fff" stroke="#888" stroke-width="0.8"/>
<text x="664" y="499.7" font-size="4.1" fill="#a6a6a6" text-anchor="start" >LINE8_B</text>
<line x1="636.5" y1="502.5" x2="660" y2="502.5" stroke="#b4b4b4" stroke-width="1"/>
<text x="635.0" y="503.7" font-size="4.1" fill="#a6a6a6" text-anchor="end" >GPS_REF_US</text>
<circle cx="661" cy="502.5" r="1.6" fill="#fff" stroke="#888" stroke-width="0.8"/>
<text x="664" y="503.7" font-size="4.1" fill="#a6a6a6" text-anchor="start" >CAM_GPS_</text>
<line x1="684.5" y1="463.4" x2="684.5" y2="558.8" stroke="#666" stroke-width="1"/>
<circle cx="684.3" cy="463.9" r="1.3" fill="#333"/>
<line x1="634.5" y1="558.5" x2="684.6" y2="558.5" stroke="#777" stroke-width="1"/>
<text x="633" y="559.8" font-size="4.1" fill="#a6a6a6" text-anchor="end" >BT_ANT</text>
<line x1="505.5" y1="562.5" x2="560.5" y2="562.5" stroke="#b4b4b4" stroke-width="1"/>
<circle cx="504.5" cy="562.5" r="1.3" fill="#fff" stroke="#888" stroke-width="0.8"/>
<text x="515" y="562.0" font-size="4.1" fill="#a6a6a6" text-anchor="start" >PWR7_EAR_</text>
<text x="561.5" y="563.7" font-size="4.1" fill="#a6a6a6" text-anchor="start" >ANT4_</text>
<line x1="505.5" y1="565.5" x2="560.5" y2="565.5" stroke="#b4b4b4" stroke-width="1"/>
<circle cx="504.5" cy="565.5" r="1.3" fill="#fff" stroke="#888" stroke-width="0.8"/>
<text x="515" y="565.0" font-size="4.1" fill="#a6a6a6" text-anchor="start" >DRX_T</text>
<text x="561.5" y="566.7" font-size="4.1" fill="#a6a6a6" text-anchor="start" >SPI1_MB</text>
<line x1="505.5" y1="568.5" x2="560.5" y2="568.5" stroke="#b4b4b4" stroke-width="1"/>
<circle cx="504.5" cy="568.5" r="1.3" fill="#fff" stroke="#888" stroke-width="0.8"/>
<text x="515" y="568.0" font-size="4.1" fill="#a6a6a6" text-anchor="start" >I2C_SE</text>
<text x="561.5" y="569.7" font-size="4.1" fill="#a6a6a6" text-anchor="start" >SDC_LINE_V</text>
<line x1="505.5" y1="572.5" x2="560.5" y2="572.5" stroke="#b4b4b4" stroke-width="1"/>
<circle cx="504.5" cy="572.5" r="1.3" fill="#fff" stroke="#888" stroke-width="0.8"/>
<text x="515" y="572.0" font-size="4.1" fill="#a6a6a6" text-anchor="start" >HPH_HPH</text>
<text x="561.5" y="573.7" font-size="4.1" fill="#a6a6a6" text-anchor="start" >MB_REF9_</text>
<line x1="505.5" y1="575.5" x2="560.5" y2="575.5" stroke="#b4b4b4" stroke-width="1"/>
<circle cx="504.5" cy="575.5" r="1.3" fill="#fff" stroke="#888" stroke-width="0.8"/>
<text x="515" y="575.0" font-size="4.1" fill="#a6a6a6" text-anchor="start" >BL_SP</text>
<text x="561.5" y="576.7" font-size="4.1" fill="#a6a6a6" text-anchor="start" >CTRL5_MON</text>
<line x1="505.5" y1="578.5" x2="560.5" y2="578.5" stroke="#b4b4b4" stroke-width="1"/>
<circle cx="504.5" cy="578.5" r="1.3" fill="#fff" stroke="#888" stroke-width="0.8"/>
<text x="515" y="578.0" font-size="4.1" fill="#a6a6a6" text-anchor="start" >OUT_RST2</text>
<text x="561.5" y="579.7" font-size="4.1" fill="#a6a6a6" text-anchor="start" >FM_SPKR6_L</text>
<line x1="505.5" y1="589.5" x2="560.5" y2="589.5" stroke="#b4b4b4" stroke-width="1"/>
<circle cx="504.5" cy="589.5" r="1.3" fill="#fff" stroke="#888" stroke-width="0.8"/>
<text x="515" y="589.0" font-size="4.1" fill="#a6a6a6" text-anchor="start" >MIC_MIC_</text>
<text x="561.5" y="590.7" font-size="4.1" fill="#a6a6a6" text-anchor="start" >VBUS_</text>
<line x1="505.5" y1="592.5" x2="560.5" y2="592.5" stroke="#b4b4b4" stroke-width="1"/>
<circle cx="504.5" cy="592.5" r="1.3" fill="#fff" stroke="#888" stroke-width="0.8"/>
<text x="515" y="592.0" font-size="4.1" fill="#a6a6a6" text-anchor="start" >SPKR2</text>
<text x="561.5" y="593.7" font-size="4.1" fill="#a6a6a6" text-anchor="start" >EN_XO_X</text>
<line x1="505.5" y1="595.5" x2="560.5" y2="595.5" stroke="#b4b4b4" stroke-width="1"/>
<circle cx="504.5" cy="595.5" r="1.3" fill="#fff" stroke="#888" stroke-width="0.8"/>
<text x="515" y="595.0" font-size="4.1" fill="#a6a6a6" text-anchor="start" >PWR_GPS4</text>
<text x="561.5" y="596.7" font-size="4.1" fill="#a6a6a6" text-anchor="start" >DIV_DIV_BA</text>
<line x1="505.5" y1="598.5" x2="560.5" y2="598.5" stroke="#b4b4b4" stroke-width="1"/>
<circle cx="504.5" cy="598.5" r="1.3" fill="#fff" stroke="#888" stroke-width="0.8"/>
<text x="515" y="598.0" font-size="4.1" fill="#a6a6a6" text-anchor="start" >LINE_DET</text>
<text x="561.5" y="599.7" font-size="4.1" fill="#a6a6a6" text-anchor="start" >HB_GP</text>
<line x1="505.5" y1="604.5" x2="560.5" y2="604.5" stroke="#b4b4b4" stroke-width="1"/>
<circle cx="504.5" cy="604.5" r="1.3" fill="#fff" stroke="#888" stroke-width="0.8"/>
<text x="515" y="604.0" font-size="4.1" fill="#a6a6a6" text-anchor="start" >LNA_DISP</text>
<text x="561.5" y="605.7" font-size="4.1" fill="#a6a6a6" text-anchor="start" >OUT0_UIM_B</text>
<line x1="505.5" y1="606.5" x2="560.5" y2="606.5" stroke="#b4b4b4" stroke-width="1"/>
<circle cx="504.5" cy="606.5" r="1.3" fill="#fff" stroke="#888" stroke-width="0.8"/>
<text x="515" y="606.0" font-size="4.1" fill="#a6a6a6" text-anchor="start" >MON_UI</text>
<text x="561.5" y="607.7" font-size="4.1" fill="#a6a6a6" text-anchor="start" >RST8_CL</text>
<line x1="505.5" y1="609.5" x2="560.5" y2="609.5" stroke="#b4b4b4" stroke-width="1"/>
<circle cx="504.5" cy="609.5" r="1.3" fill="#fff" stroke="#888" stroke-width="0.8"/>
<text x="515" y="609.0" font-size="4.1" fill="#a6a6a6" text-anchor="start" >VDD_VREG2</text>
<text x="561.5" y="610.7" font-size="4.1" fill="#a6a6a6" text-anchor="start" >EN_SI</text>
<line x1="505.5" y1="613.5" x2="560.5" y2="613.5" stroke="#b4b4b4" stroke-width="1"/>
<circle cx="504.5" cy="613.5" r="1.3" fill="#fff" stroke="#888" stroke-width="0.8"/>
<text x="515" y="613.0" font-size="4.1" fill="#a6a6a6" text-anchor="start" >WLAN8</text>
<text x="561.5" y="614.7" font-size="4.1" fill="#a6a6a6" text-anchor="start" >EAR_L</text>
<line x1="634.5" y1="568.5" x2="692.5" y2="568.5" stroke="#b4b4b4" stroke-width="1"/>
<text x="633.0" y="569.7" font-size="4.1" fill="#a6a6a6" text-anchor="end" >CAM_RF1_TE_</text>
<text x="694.0" y="569.7" font-size="4.1" fill="#a6a6a6" text-anchor="start" >LNA_IN_MIC6</text>
<text x="667" y="567.7" font-size="4.1" fill="#a6a6a6" text-anchor="middle" >LDO_LB_LDO</text>
<circle cx="636.5" cy="568.5" r="1.6" fill="#fff" stroke="#888" stroke-width="0.8"/>
<line x1="634.5" y1="571.5" x2="692.5" y2="571.5" stroke="#b4b4b4" stroke-width="1"/>
<text x="633.0" y="572.7" font-size="4.1" fill="#a6a6a6" text-anchor="end" >N_IO_UAR</text>
<text x="694.0" y="572.7" font-size="4.1" fill="#a6a6a6" text-anchor="start" >GPIO_MO</text>
<text x="667" y="570.7" font-size="4.1" fill="#a6a6a6" text-anchor="middle" >USB1_LB_SIM</text>
<line x1="634.5" y1="574.5" x2="692.5" y2="574.5" stroke="#b4b4b4" stroke-width="1"/>
<text x="633.0" y="575.7" font-size="4.1" fill="#a6a6a6" text-anchor="end" >AUD_OUT_</text>
<text x="694.0" y="575.7" font-size="4.1" fill="#a6a6a6" text-anchor="start" >VBUS_DET3_D</text>
<text x="667" y="573.7" font-size="4.1" fill="#a6a6a6" text-anchor="middle" >UART4_PRX</text>
<line x1="634.5" y1="579.5" x2="692.5" y2="579.5" stroke="#b4b4b4" stroke-width="1"/>
<text x="633.0" y="580.7" font-size="4.1" fill="#a6a6a6" text-anchor="end" >SPI9_I2C2</text>
<text x="694.0" y="580.7" font-size="4.1" fill="#a6a6a6" text-anchor="start" >PWR0_NFC_M</text>
<text x="667" y="578.7" font-size="4.1" fill="#a6a6a6" text-anchor="middle" >MIPI1_TX_LD</text>
<line x1="634.5" y1="582.5" x2="692.5" y2="582.5" stroke="#b4b4b4" stroke-width="1"/>
<text x="633.0" y="583.7" font-size="4.1" fill="#a6a6a6" text-anchor="end" >DISP6_HB6_P</text>
<text x="694.0" y="583.7" font-size="4.1" fill="#a6a6a6" text-anchor="start" >PM_TE_DE</text>
<text x="667" y="581.7" font-size="4.1" fill="#a6a6a6" text-anchor="middle" >LNA5_DATA</text>
<line x1="634.5" y1="585.5" x2="692.5" y2="585.5" stroke="#b4b4b4" stroke-width="1"/>
<text x="633.0" y="586.7" font-size="4.1" fill="#a6a6a6" text-anchor="end" >EN_TE1_</text>
<text x="694.0" y="586.7" font-size="4.1" fill="#a6a6a6" text-anchor="start" >BATT_MBHC3_</text>
<text x="667" y="584.7" font-size="4.1" fill="#a6a6a6" text-anchor="middle" >PA3_OUT_MON</text>
<line x1="634.5" y1="588.5" x2="692.5" y2="588.5" stroke="#b4b4b4" stroke-width="1"/>
<text x="633.0" y="589.7" font-size="4.1" fill="#a6a6a6" text-anchor="end" >CTRL_DIS</text>
<text x="694.0" y="589.7" font-size="4.1" fill="#a6a6a6" text-anchor="start" >HB_P1_OUT_V</text>
<text x="667" y="587.7" font-size="4.1" fill="#a6a6a6" text-anchor="middle" >UART_REF</text>
<line x1="634.5" y1="591.5" x2="652" y2="591.5" stroke="#b4b4b4" stroke-width="1"/>
<text x="633.0" y="592.7" font-size="4.1" fill="#a6a6a6" text-anchor="end" >ANT_DIV_INT</text>
<circle cx="653" cy="591.5" r="1.6" fill="#fff" stroke="#888" stroke-width="0.8"/>
<text x="656" y="592.7" font-size="4.1" fill="#a6a6a6" text-anchor="start" >MBHC_X</text>
<line x1="634.5" y1="593.5" x2="692.5" y2="593.5" stroke="#b4b4b4" stroke-width="1"/>
<text x="633.0" y="594.7" font-size="4.1" fill="#a6a6a6" text-anchor="end" >VBUS_NFC9</text>
<text x="694.0" y="594.7" font-size="4.1" fill="#a6a6a6" text-anchor="start" >DIV_LB2_T</text>
<text x="667" y="592.7" font-size="4.1" fill="#a6a6a6" text-anchor="middle" >IN_CLK6_P</text>
<line x1="634.5" y1="596.5" x2="692.5" y2="596.5" stroke="#b4b4b4" stroke-width="1"/>
<text x="633.0" y="597.7" font-size="4.1" fill="#a6a6a6" text-anchor="end" >RF_RST_</text>
<text x="694.0" y="597.7" font-size="4.1" fill="#a6a6a6" text-anchor="start" >PWR2_BAT</text>
<text x="667" y="595.7" font-size="4.1" fill="#a6a6a6" text-anchor="middle" >VREG_MIPI</text>
<line x1="634.5" y1="600.5" x2="692.5" y2="600.5" stroke="#b4b4b4" stroke-width="1"/>
<text x="633.0" y="601.7" font-size="4.1" fill="#a6a6a6" text-anchor="end" >XO5_RF_L</text>
<text x="694.0" y="601.7" font-size="4.1" fill="#a6a6a6" text-anchor="start" >VBUS_AUD_L</text>
<text x="667" y="599.7" font-size="4.1" fill="#a6a6a6" text-anchor="middle" >SIM_TP_PRX8</text>
<line x1="634.5" y1="602.5" x2="692.5" y2="602.5" stroke="#b4b4b4" stroke-width="1"/>
<text x="633.0" y="603.7" font-size="4.1" fill="#a6a6a6" text-anchor="end" >RF_SPKR_A</text>
<text x="694.0" y="603.7" font-size="4.1" fill="#a6a6a6" text-anchor="start" >MBHC_FM_VBU</text>
<text x="667" y="601.7" font-size="4.1" fill="#a6a6a6" text-anchor="middle" >EAR_LDO7_US</text>
<line x1="634.5" y1="606.5" x2="692.5" y2="606.5" stroke="#b4b4b4" stroke-width="1"/>
<text x="633.0" y="607.7" font-size="4.1" fill="#a6a6a6" text-anchor="end" >P3_ANT6_IN</text>
<text x="694.0" y="607.7" font-size="4.1" fill="#a6a6a6" text-anchor="start" >LINE_UI</text>
<text x="667" y="605.7" font-size="4.1" fill="#a6a6a6" text-anchor="middle" >UIM_PRX_SDC</text>
<line x1="634.5" y1="608.5" x2="692.5" y2="608.5" stroke="#b4b4b4" stroke-width="1"/>
<text x="633.0" y="609.7" font-size="4.1" fill="#a6a6a6" text-anchor="end" >MBHC8_TE8_</text>
<text x="694.0" y="609.7" font-size="4.1" fill="#a6a6a6" text-anchor="start" >GPIO4_CAM1_</text>
<text x="667" y="607.7" font-size="4.1" fill="#a6a6a6" text-anchor="middle" >TP_RST_D</text>
<line x1="634.5" y1="612.5" x2="692.5" y2="612.5" stroke="#b4b4b4" stroke-width="1"/>
<text x="633.0" y="613.7" font-size="4.1" fill="#a6a6a6" text-anchor="end" >MIC2_OU</text>
<text x="694.0" y="613.7" font-size="4.1" fill="#a6a6a6" text-anchor="start" >DISP_EN0_D</text>
<text x="667" y="611.7" font-size="4.1" fill="#a6a6a6" text-anchor="middle" >MBHC_PWR_P</text>
<line x1="634.5" y1="615.5" x2="692.5" y2="615.5" stroke="#b4b4b4" stroke-width="1"/>
<text x="633.0" y="616.7" font-size="4.1" fill="#a6a6a6" text-anchor="end" >DATA_VRE</text>
<text x="694.0" y="616.7" font-size="4.1" fill="#a6a6a6" text-anchor="start" >MIC_SPKR_VD</text>
<text x="667" y="614.7" font-size="4.1" fill="#a6a6a6" text-anchor="middle" >MON_HPH_I</text>
<line x1="634.5" y1="621.5" x2="692.5" y2="621.5" stroke="#b4b4b4" stroke-width="1"/>
<text x="633.0" y="622.7" font-size="4.1" fill="#a6a6a6" text-anchor="end" >SDC_UART_D</text>
<text x="694.0" y="622.7" font-size="4.1" fill="#a6a6a6" text-anchor="start" >PA_TE8_</text>
<text x="667" y="620.7" font-size="4.1" fill="#a6a6a6" text-anchor="middle" >SDC_MBHC_</text>
<line x1="634.5" y1="625.5" x2="652" y2="625.5" stroke="#b4b4b4" stroke-width="1"/>
<text x="633.0" y="626.7" font-size="4.1" fill="#a6a6a6" text-anchor="end" >LB_RX_L</text>
<circle cx="653" cy="625.5" r="1.6" fill="#fff" stroke="#888" stroke-width="0.8"/>
<text x="656" y="626.7" font-size="4.1" fill="#a6a6a6" text-anchor="start" >MIPI9_</text>
<line x1="634.5" y1="631.5" x2="692.5" y2="631.5" stroke="#b4b4b4" stroke-width="1"/>
<text x="633.0" y="632.7" font-size="4.1" fill="#a6a6a6" text-anchor="end" >INT3_USB8_</text>
<text x="694.0" y="632.7" font-size="4.1" fill="#a6a6a6" text-anchor="start" >MBHC7_LINE_</text>
<text x="667" y="630.7" font-size="4.1" fill="#a6a6a6" text-anchor="middle" >VREG8_DI</text>
<line x1="634.5" y1="634.5" x2="692.5" y2="634.5" stroke="#b4b4b4" stroke-width="1"/>
<text x="633.0" y="635.7" font-size="4.1" fill="#a6a6a6" text-anchor="end" >TE4_PA_CT</text>
<text x="694.0" y="635.7" font-size="4.1" fill="#a6a6a6" text-anchor="start" >LNA_ANT2_</text>
<text x="667" y="633.7" font-size="4.1" fill="#a6a6a6" text-anchor="middle" >USB_DIV_TE_</text>
<circle cx="636.5" cy="634.5" r="1.6" fill="#fff" stroke="#888" stroke-width="0.8"/>
<line x1="634.5" y1="640.5" x2="692.5" y2="640.5" stroke="#b4b4b4" stroke-width="1"/>
<text x="633.0" y="641.7" font-size="4.1" fill="#a6a6a6" text-anchor="end" >BATT9_MON7_</text>
<text x="694.0" y="641.7" font-size="4.1" fill="#a6a6a6" text-anchor="start" >SPKR0_XO</text>
<text x="667" y="639.7" font-size="4.1" fill="#a6a6a6" text-anchor="middle" >TX_REF0_LDO</text>
<line x1="634.5" y1="643.5" x2="692.5" y2="643.5" stroke="#b4b4b4" stroke-width="1"/>
<text x="633.0" y="644.7" font-size="4.1" fill="#a6a6a6" text-anchor="end" >PM4_TX5_TP_</text>
<text x="694.0" y="644.7" font-size="4.1" fill="#a6a6a6" text-anchor="start" >VBUS_SPI_PA</text>
<text x="667" y="642.7" font-size="4.1" fill="#a6a6a6" text-anchor="middle" >USB9_TE_S</text>
<line x1="634.5" y1="646.5" x2="692.5" y2="646.5" stroke="#b4b4b4" stroke-width="1"/>
<text x="633.0" y="647.7" font-size="4.1" fill="#a6a6a6" text-anchor="end" >CLK_VBUS_</text>
<text x="694.0" y="647.7" font-size="4.1" fill="#a6a6a6" text-anchor="start" >LNA_MIPI</text>
<text x="667" y="645.7" font-size="4.1" fill="#a6a6a6" text-anchor="middle" >EAR_SPI_</text>
<line x1="634.5" y1="649.5" x2="692.5" y2="649.5" stroke="#b4b4b4" stroke-width="1"/>
<text x="633.0" y="650.7" font-size="4.1" fill="#a6a6a6" text-anchor="end" >AUD8_SI</text>
<text x="694.0" y="650.7" font-size="4.1" fill="#a6a6a6" text-anchor="start" >SPI_BT9</text>
<text x="667" y="648.7" font-size="4.1" fill="#a6a6a6" text-anchor="middle" >EN6_DRX_V</text>
<line x1="634.5" y1="652.5" x2="692.5" y2="652.5" stroke="#b4b4b4" stroke-width="1"/>
<text x="633.0" y="653.7" font-size="4.1" fill="#a6a6a6" text-anchor="end" >LB_OUT_FM_V</text>
<text x="694.0" y="653.7" font-size="4.1" fill="#a6a6a6" text-anchor="start" >USB8_BL3_GP</text>
<text x="667" y="651.7" font-size="4.1" fill="#a6a6a6" text-anchor="middle" >VBUS7_MB_</text>
<line x1="634.5" y1="658.5" x2="692.5" y2="658.5" stroke="#b4b4b4" stroke-width="1"/>
<text x="633.0" y="659.7" font-size="4.1" fill="#a6a6a6" text-anchor="end" >RF4_BT_P</text>
<text x="694.0" y="659.7" font-size="4.1" fill="#a6a6a6" text-anchor="start" >ISNS6_PRX_M</text>
<text x="667" y="657.7" font-size="4.1" fill="#a6a6a6" text-anchor="middle" >BT5_CLK_REF</text>
<line x1="634.5" y1="661.5" x2="692.5" y2="661.5" stroke="#b4b4b4" stroke-width="1"/>
<text x="633.0" y="662.7" font-size="4.1" fill="#a6a6a6" text-anchor="end" >NFC_SPI</text>
<text x="694.0" y="662.7" font-size="4.1" fill="#a6a6a6" text-anchor="start" >FM8_DET</text>
<text x="667" y="660.7" font-size="4.1" fill="#a6a6a6" text-anchor="middle" >XO0_DATA9_</text>
<line x1="634.5" y1="664.5" x2="692.5" y2="664.5" stroke="#b4b4b4" stroke-width="1"/>
<text x="633.0" y="665.7" font-size="4.1" fill="#a6a6a6" text-anchor="end" >ANT_LNA_BA</text>
<text x="694.0" y="665.7" font-size="4.1" fill="#a6a6a6" text-anchor="start" >DET_EAR4_A</text>
<text x="667" y="663.7" font-size="4.1" fill="#a6a6a6" text-anchor="middle" >GPS8_UIM_I2</text>
<line x1="634.5" y1="667.5" x2="692.5" y2="667.5" stroke="#b4b4b4" stroke-width="1"/>
<text x="633.0" y="668.7" font-size="4.1" fill="#a6a6a6" text-anchor="end" >MIPI_ISNS_P</text>
<text x="694.0" y="668.7" font-size="4.1" fill="#a6a6a6" text-anchor="start" >DET_LINE</text>
<text x="667" y="666.7" font-size="4.1" fill="#a6a6a6" text-anchor="middle" >DIV_DET5_</text>
<line x1="634.5" y1="670.5" x2="692.5" y2="670.5" stroke="#b4b4b4" stroke-width="1"/>
<text x="633.0" y="671.7" font-size="4.1" fill="#a6a6a6" text-anchor="end" >UART_VREG</text>
<text x="694.0" y="671.7" font-size="4.1" fill="#a6a6a6" text-anchor="start" >OUT7_MO</text>
<text x="667" y="669.7" font-size="4.1" fill="#a6a6a6" text-anchor="middle" >OUT_HB_WLAN</text>
<line x1="634.5" y1="673.5" x2="692.5" y2="673.5" stroke="#b4b4b4" stroke-width="1"/>
<text x="633.0" y="674.7" font-size="4.1" fill="#a6a6a6" text-anchor="end" >ISNS6_BL</text>
<text x="694.0" y="674.7" font-size="4.1" fill="#a6a6a6" text-anchor="start" >BATT_DIV0_M</text>
<text x="667" y="672.7" font-size="4.1" fill="#a6a6a6" text-anchor="middle" >BT_LINE_</text>
<line x1="634.5" y1="676.5" x2="692.5" y2="676.5" stroke="#b4b4b4" stroke-width="1"/>
<text x="633.0" y="677.7" font-size="4.1" fill="#a6a6a6" text-anchor="end" >REF4_LDO5_S</text>
<text x="694.0" y="677.7" font-size="4.1" fill="#a6a6a6" text-anchor="start" >PRX2_SEL_</text>
<text x="667" y="675.7" font-size="4.1" fill="#a6a6a6" text-anchor="middle" >CAM_IN1_CTR</text>
<line x1="634.5" y1="679.5" x2="692.5" y2="679.5" stroke="#b4b4b4" stroke-width="1"/>
<text x="633.0" y="680.7" font-size="4.1" fill="#a6a6a6" text-anchor="end" >LDO7_EAR_I</text>
<text x="694.0" y="680.7" font-size="4.1" fill="#a6a6a6" text-anchor="start" >MIPI_N_MIC_</text>
<text x="667" y="678.7" font-size="4.1" fill="#a6a6a6" text-anchor="middle" >RST_VDD3_US</text>
<line x1="497.5" y1="673.5" x2="560.5" y2="673.5" stroke="#b4b4b4" stroke-width="1"/>
<text x="496.0" y="674.7" font-size="4.1" fill="#a6a6a6" text-anchor="end" >OUT_GPS8</text>
<text x="562.0" y="674.7" font-size="4.1" fill="#a6a6a6" text-anchor="start" >MB_VBUS_P</text>
<text x="515" y="672.7" font-size="4.1" fill="#a6a6a6" text-anchor="middle" >EAR_TE5_I</text>
<line x1="497.5" y1="676.5" x2="560.5" y2="676.5" stroke="#b4b4b4" stroke-width="1"/>
<text x="496.0" y="677.7" font-size="4.1" fill="#a6a6a6" text-anchor="end" >SPKR_EN_</text>
<text x="562.0" y="677.7" font-size="4.1" fill="#a6a6a6" text-anchor="start" >TP5_PM_BL</text>
<text x="515" y="675.7" font-size="4.1" fill="#a6a6a6" text-anchor="middle" >BT_BT_ANT</text>
<line x1="497.5" y1="697.5" x2="692.5" y2="697.5" stroke="#b4b4b4" stroke-width="1"/>
<text x="496.0" y="698.7" font-size="4.1" fill="#a6a6a6" text-anchor="end" >SEL5_MON8</text>
<text x="694.0" y="698.7" font-size="4.1" fill="#a6a6a6" text-anchor="start" >ISNS1_LD</text>
<text x="512" y="696.7" font-size="4.1" fill="#a6a6a6" text-anchor="middle" >EAR_UART_</text>
<line x1="497.5" y1="700.5" x2="692.5" y2="700.5" stroke="#b4b4b4" stroke-width="1"/>
<text x="496.0" y="701.7" font-size="4.1" fill="#a6a6a6" text-anchor="end" >HB9_UIM_H</text>
<text x="694.0" y="701.7" font-size="4.1" fill="#a6a6a6" text-anchor="start" >GPS_TE_B</text>
<text x="512" y="699.7" font-size="4.1" fill="#a6a6a6" text-anchor="middle" >BATT_N5_S</text>
<line x1="497.5" y1="709.5" x2="692.5" y2="709.5" stroke="#b4b4b4" stroke-width="1"/>
<text x="496.0" y="710.7" font-size="4.1" fill="#a6a6a6" text-anchor="end" >NFC_CLK_R</text>
<text x="694.0" y="710.7" font-size="4.1" fill="#a6a6a6" text-anchor="start" >CLK_NFC2</text>
<text x="512" y="708.7" font-size="4.1" fill="#a6a6a6" text-anchor="middle" >CLK9_DET2</text>
<circle cx="499.5" cy="709.5" r="1.6" fill="#fff" stroke="#888" stroke-width="0.8"/>
<rect x="689.0" y="708.0" width="3" height="3" fill="#fff" stroke="#888" stroke-width="0.8"/>
<line x1="497.5" y1="713.5" x2="692.5" y2="713.5" stroke="#bbb" stroke-width="1"/>
<text x="496.0" y="714.7" font-size="4.1" fill="#a6a6a6" text-anchor="end" >GPIO_P_OU</text>
<text x="512" y="712.7" font-size="4.1" fill="#a6a6a6" text-anchor="middle" >RF6_FM_CL</text>
<line x1="497.5" y1="727.5" x2="692.5" y2="727.5" stroke="#b4b4b4" stroke-width="1"/>
<text x="496.0" y="728.7" font-size="4.1" fill="#a6a6a6" text-anchor="end" >UIM4_WLAN</text>
<text x="694.0" y="728.7" font-size="4.1" fill="#a6a6a6" text-anchor="start" >BL5_MBHC</text>
<text x="512" y="726.7" font-size="4.1" fill="#a6a6a6" text-anchor="middle" >SIM_BT7_B</text>
<circle cx="499.5" cy="727.5" r="1.6" fill="#fff" stroke="#888" stroke-width="0.8"/>
<rect x="689.0" y="726.0" width="3" height="3" fill="#fff" stroke="#888" stroke-width="0.8"/>
<line x1="497.5" y1="716.5" x2="551" y2="716.5" stroke="#b4b4b4" stroke-width="1"/>
<text x="496.0" y="717.7" font-size="4.1" fill="#a6a6a6" text-anchor="end" >GPS_RF_P</text>
<text x="510" y="715.7" font-size="4.1" fill="#a6a6a6" text-anchor="middle" >P4_BL_R</text>
<circle cx="552.7" cy="716.5" r="1.4" fill="#fff" stroke="#888" stroke-width="0.8"/>
<line x1="497.5" y1="733.5" x2="551" y2="733.5" stroke="#b4b4b4" stroke-width="1"/>
<text x="496.0" y="734.7" font-size="4.1" fill="#a6a6a6" text-anchor="end" >EAR_UART0_</text>
<text x="510" y="732.7" font-size="4.1" fill="#a6a6a6" text-anchor="middle" >RST6_VDD</text>
<circle cx="552.7" cy="733.5" r="1.4" fill="#fff" stroke="#888" stroke-width="0.8"/>
<line x1="497.5" y1="736.5" x2="551" y2="736.5" stroke="#b4b4b4" stroke-width="1"/>
<text x="496.0" y="737.7" font-size="4.1" fill="#a6a6a6" text-anchor="end" >BT_DIV1_G</text>
<text x="510" y="735.7" font-size="4.1" fill="#a6a6a6" text-anchor="middle" >MIC_GPI</text>
<circle cx="552.7" cy="736.5" r="1.4" fill="#fff" stroke="#888" stroke-width="0.8"/>
<line x1="497.5" y1="738.5" x2="551" y2="738.5" stroke="#b4b4b4" stroke-width="1"/>
<text x="496.0" y="739.7" font-size="4.1" fill="#a6a6a6" text-anchor="end" >UIM_MIP</text>
<text x="510" y="737.7" font-size="4.1" fill="#a6a6a6" text-anchor="middle" >BL_DIV8</text>
<circle cx="552.7" cy="738.5" r="1.4" fill="#fff" stroke="#888" stroke-width="0.8"/>
<line x1="497.5" y1="745.5" x2="551" y2="745.5" stroke="#b4b4b4" stroke-width="1"/>
<text x="496.0" y="746.7" font-size="4.1" fill="#a6a6a6" text-anchor="end" >BATT4_UIM7</text>
<text x="510" y="744.7" font-size="4.1" fill="#a6a6a6" text-anchor="middle" >PRX_REF0_I</text>
<circle cx="552.7" cy="745.5" r="1.4" fill="#fff" stroke="#888" stroke-width="0.8"/>
<line x1="497.5" y1="747.5" x2="551" y2="747.5" stroke="#b4b4b4" stroke-width="1"/>
<text x="496.0" y="748.7" font-size="4.1" fill="#a6a6a6" text-anchor="end" >WLAN8_</text>
<text x="510" y="746.7" font-size="4.1" fill="#a6a6a6" text-anchor="middle" >GPIO_LDO</text>
<circle cx="552.7" cy="747.5" r="1.4" fill="#fff" stroke="#888" stroke-width="0.8"/>
<line x1="497.5" y1="750.5" x2="551" y2="750.5" stroke="#b4b4b4" stroke-width="1"/>
<text x="496.0" y="751.7" font-size="4.1" fill="#a6a6a6" text-anchor="end" >BATT_T</text>
<text x="510" y="749.7" font-size="4.1" fill="#a6a6a6" text-anchor="middle" >MB_BL_DET_</text>
<circle cx="552.7" cy="750.5" r="1.4" fill="#fff" stroke="#888" stroke-width="0.8"/>
<line x1="497.5" y1="753.5" x2="551" y2="753.5" stroke="#b4b4b4" stroke-width="1"/>
<text x="496.0" y="754.7" font-size="4.1" fill="#a6a6a6" text-anchor="end" >BATT_PM9_</text>
<text x="510" y="752.7" font-size="4.1" fill="#a6a6a6" text-anchor="middle" >REF_DET5_</text>
<circle cx="552.7" cy="753.5" r="1.4" fill="#fff" stroke="#888" stroke-width="0.8"/>
<line x1="497.5" y1="755.5" x2="551" y2="755.5" stroke="#b4b4b4" stroke-width="1"/>
<text x="496.0" y="756.7" font-size="4.1" fill="#a6a6a6" text-anchor="end" >VDD5_XO5</text>
<text x="510" y="754.7" font-size="4.1" fill="#a6a6a6" text-anchor="middle" >EN_EN2_A</text>
<circle cx="552.7" cy="755.5" r="1.4" fill="#fff" stroke="#888" stroke-width="0.8"/>
<line x1="497.5" y1="758.5" x2="551" y2="758.5" stroke="#b4b4b4" stroke-width="1"/>
<text x="496.0" y="759.7" font-size="4.1" fill="#a6a6a6" text-anchor="end" >I2C5_WL</text>
<text x="510" y="757.7" font-size="4.1" fill="#a6a6a6" text-anchor="middle" >GPIO_VRE</text>
<circle cx="552.7" cy="758.5" r="1.4" fill="#fff" stroke="#888" stroke-width="0.8"/>
<line x1="497.5" y1="763.5" x2="551" y2="763.5" stroke="#b4b4b4" stroke-width="1"/>
<text x="496.0" y="764.7" font-size="4.1" fill="#a6a6a6" text-anchor="end" >NFC_EN2_</text>
<text x="510" y="762.7" font-size="4.1" fill="#a6a6a6" text-anchor="middle" >I2C_SPKR_I</text>
<circle cx="552.7" cy="763.5" r="1.4" fill="#fff" stroke="#888" stroke-width="0.8"/>
<line x1="497.5" y1="766.5" x2="551" y2="766.5" stroke="#b4b4b4" stroke-width="1"/>
<text x="496.0" y="767.7" font-size="4.1" fill="#a6a6a6" text-anchor="end" >DISP_PWR_</text>
<text x="510" y="765.7" font-size="4.1" fill="#a6a6a6" text-anchor="middle" >IN_EAR5_L</text>
<circle cx="552.7" cy="766.5" r="1.4" fill="#fff" stroke="#888" stroke-width="0.8"/>
<line x1="497.5" y1="782.5" x2="551" y2="782.5" stroke="#b4b4b4" stroke-width="1"/>
<text x="496.0" y="783.7" font-size="4.1" fill="#a6a6a6" text-anchor="end" >LINE_EN</text>
<text x="510" y="781.7" font-size="4.1" fill="#a6a6a6" text-anchor="middle" >WLAN_SIM_</text>
<circle cx="552.7" cy="782.5" r="1.4" fill="#fff" stroke="#888" stroke-width="0.8"/>
<line x1="497.5" y1="785.5" x2="551" y2="785.5" stroke="#b4b4b4" stroke-width="1"/>
<text x="496.0" y="786.7" font-size="4.1" fill="#a6a6a6" text-anchor="end" >UART_P_TX_</text>
<text x="510" y="784.7" font-size="4.1" fill="#a6a6a6" text-anchor="middle" >PA9_AN</text>
<circle cx="552.7" cy="785.5" r="1.4" fill="#fff" stroke="#888" stroke-width="0.8"/>
<line x1="497.5" y1="788.5" x2="551" y2="788.5" stroke="#b4b4b4" stroke-width="1"/>
<text x="496.0" y="789.7" font-size="4.1" fill="#a6a6a6" text-anchor="end" >LNA_RX0_XO</text>
<text x="510" y="787.7" font-size="4.1" fill="#a6a6a6" text-anchor="middle" >RST_HP</text>
<circle cx="552.7" cy="788.5" r="1.4" fill="#fff" stroke="#888" stroke-width="0.8"/>
<line x1="767.5" y1="280.5" x2="819.5" y2="280.5" stroke="#b4b4b4" stroke-width="1"/>
<text x="766" y="281.9" font-size="4.1" fill="#a6a6a6" text-anchor="end" >ISNS_DATA</text>
<text x="775" y="279.9" font-size="4.1" fill="#a6a6a6" text-anchor="start" >DIV_UIM_</text>
<line x1="809.5" y1="283.9" x2="809.5" y2="597.4" stroke="#444" stroke-width="1.2"/>
<line x1="809.5" y1="283.5" x2="819.5" y2="283.5" stroke="#666" stroke-width="1"/>
<line x1="809.5" y1="597.5" x2="819.5" y2="597.5" stroke="#666" stroke-width="1"/>
<text x="821" y="282.4" font-size="4.1" fill="#a6a6a6" text-anchor="start" >MB2_NFC_</text>
<text x="821" y="285.2" font-size="4.1" fill="#a6a6a6" text-anchor="start" >NFC1_PA4_</text>
<line x1="767.5" y1="309.5" x2="985.5" y2="309.5" stroke="#b4b4b4" stroke-width="1"/>
<text x="766.0" y="310.7" font-size="4.1" fill="#a6a6a6" text-anchor="end" >MON8_BL3_A</text>
<text x="987.0" y="310.7" font-size="4.1" fill="#a6a6a6" text-anchor="start" >DATA_IO_LDO7</text>
<text x="790" y="308.7" font-size="4.1" fill="#a6a6a6" text-anchor="middle" >TE_EAR7_S</text>
<circle cx="809.5" cy="309.5" r="1.0" fill="#555"/>
<line x1="767.5" y1="312.5" x2="985.5" y2="312.5" stroke="#b4b4b4" stroke-width="1"/>
<text x="766.0" y="313.7" font-size="4.1" fill="#a6a6a6" text-anchor="end" >MBHC2_BL_I</text>
<text x="987.0" y="313.7" font-size="4.1" fill="#a6a6a6" text-anchor="start" >IO_NFC6_PWR_</text>
<text x="790" y="311.7" font-size="4.1" fill="#a6a6a6" text-anchor="middle" >PM_MB3_AN</text>
<circle cx="809.5" cy="312.5" r="1.0" fill="#555"/>
<line x1="767.5" y1="315.5" x2="985.5" y2="315.5" stroke="#b4b4b4" stroke-width="1"/>
<text x="766.0" y="316.7" font-size="4.1" fill="#a6a6a6" text-anchor="end" >EAR_DATA_T</text>
<text x="987.0" y="316.7" font-size="4.1" fill="#a6a6a6" text-anchor="start" >TP5_SIM_VDD_</text>
<text x="790" y="314.7" font-size="4.1" fill="#a6a6a6" text-anchor="middle" >PWR_INT_L</text>
<circle cx="809.5" cy="315.5" r="1.0" fill="#555"/>
<line x1="767.5" y1="324.5" x2="985.5" y2="324.5" stroke="#b4b4b4" stroke-width="1"/>
<text x="766.0" y="325.7" font-size="4.1" fill="#a6a6a6" text-anchor="end" >UART5_PM_M</text>
<text x="987.0" y="325.7" font-size="4.1" fill="#a6a6a6" text-anchor="start" >P5_UIM6_DATA</text>
<text x="790" y="323.7" font-size="4.1" fill="#a6a6a6" text-anchor="middle" >TX_PM_LB1</text>
<circle cx="809.5" cy="324.5" r="1.0" fill="#555"/>
<line x1="894.5" y1="243.5" x2="928.6" y2="243.5" stroke="#555" stroke-width="1.2"/>
<line x1="928.5" y1="243.5" x2="928.5" y2="253.0" stroke="#444" stroke-width="1.5"/>
<line x1="928.6" y1="243.5" x2="985.5" y2="243.5" stroke="#b4b4b4" stroke-width="1"/>
<text x="986.5" y="244.7" font-size="4.1" fill="#a6a6a6" text-anchor="start" >WLAN_RF9</text>
<line x1="928.6" y1="246.5" x2="985.5" y2="246.5" stroke="#b4b4b4" stroke-width="1"/>
<text x="986.5" y="247.7" font-size="4.1" fill="#a6a6a6" text-anchor="start" >AUD4_IN_</text>
<line x1="928.6" y1="249.5" x2="985.5" y2="249.5" stroke="#b4b4b4" stroke-width="1"/>
<text x="986.5" y="250.7" font-size="4.1" fill="#a6a6a6" text-anchor="start" >OUT_DATA_</text>
<line x1="928.6" y1="252.5" x2="985.5" y2="252.5" stroke="#b4b4b4" stroke-width="1"/>
<text x="986.5" y="253.7" font-size="4.1" fill="#a6a6a6" text-anchor="start" >RF9_RX_VDD</text>
<text x="893" y="244.7" font-size="4.1" fill="#a6a6a6" text-anchor="end" >N_GPIO_CLK</text>
<text x="912" y="242.7" font-size="4.1" fill="#a6a6a6" text-anchor="middle" >UIM6_VDD9_I2</text>
<line x1="894.5" y1="258.5" x2="928.6" y2="258.5" stroke="#555" stroke-width="1.2"/>
<line x1="928.5" y1="258.5" x2="928.5" y2="262.0" stroke="#444" stroke-width="1.5"/>
<line x1="928.6" y1="258.5" x2="985.5" y2="258.5" stroke="#b4b4b4" stroke-width="1"/>
<text x="986.5" y="259.7" font-size="4.1" fill="#a6a6a6" text-anchor="start" >LB_SPI_C</text>
<line x1="928.6" y1="261.5" x2="985.5" y2="261.5" stroke="#b4b4b4" stroke-width="1"/>
<text x="986.5" y="262.7" font-size="4.1" fill="#a6a6a6" text-anchor="start" >DET_MBHC_UIM</text>
<text x="893" y="259.7" font-size="4.1" fill="#a6a6a6" text-anchor="end" >HB2_LB_HB_</text>
<text x="912" y="257.7" font-size="4.1" fill="#a6a6a6" text-anchor="middle" >CAM_GPS_SDC_</text>
<line x1="894.5" y1="271.5" x2="928.6" y2="271.5" stroke="#555" stroke-width="1.2"/>
<line x1="928.5" y1="271.5" x2="928.5" y2="275.0" stroke="#444" stroke-width="1.5"/>
<line x1="928.6" y1="271.5" x2="985.5" y2="271.5" stroke="#b4b4b4" stroke-width="1"/>
<text x="986.5" y="272.7" font-size="4.1" fill="#a6a6a6" text-anchor="start" >LB_TE_EN</text>
<line x1="928.6" y1="274.5" x2="985.5" y2="274.5" stroke="#b4b4b4" stroke-width="1"/>
<text x="986.5" y="275.7" font-size="4.1" fill="#a6a6a6" text-anchor="start" >EN_NFC6_I2C_</text>
<text x="893" y="272.7" font-size="4.1" fill="#a6a6a6" text-anchor="end" >TE_BATT_RE</text>
<text x="912" y="270.7" font-size="4.1" fill="#a6a6a6" text-anchor="middle" >EAR7_RST5_IN</text>
<line x1="894.5" y1="282.5" x2="928.6" y2="282.5" stroke="#555" stroke-width="1.2"/>
<line x1="928.5" y1="282.5" x2="928.5" y2="286.0" stroke="#444" stroke-width="1.5"/>
<line x1="928.6" y1="282.5" x2="985.5" y2="282.5" stroke="#b4b4b4" stroke-width="1"/>
<text x="986.5" y="283.7" font-size="4.1" fill="#a6a6a6" text-anchor="start" >I2C_ANT_</text>
<line x1="928.6" y1="285.5" x2="985.5" y2="285.5" stroke="#b4b4b4" stroke-width="1"/>
<text x="986.5" y="286.7" font-size="4.1" fill="#a6a6a6" text-anchor="start" >MIC_PRX9</text>
<text x="893" y="283.7" font-size="4.1" fill="#a6a6a6" text-anchor="end" >USB1_PA_AU</text>
<text x="912" y="281.7" font-size="4.1" fill="#a6a6a6" text-anchor="middle" >USB6_LB3_DRX</text>
<text x="898" y="255.5" font-size="4.1" fill="#a6a6a6" text-anchor="start" >DIV2_SIM_BL_RST9_LNA9_</text>
<text x="898" y="267" font-size="4.1" fill="#a6a6a6" text-anchor="start" >MON_RF_SDC1_ISNS_FM8_P</text>
<text x="898" y="278" font-size="4.1" fill="#a6a6a6" text-anchor="start" >MB8_SEL_DISP6_MIC4_ANT</text>
<line x1="1060.5" y1="245.5" x2="1109.5" y2="245.5" stroke="#b4b4b4" stroke-width="1"/>
<text x="1059.0" y="246.7" font-size="4.1" fill="#a6a6a6" text-anchor="end" >SEL_DIV_P</text>
<text x="1111.0" y="246.7" font-size="4.1" fill="#a6a6a6" text-anchor="start" >OUT_GPS_</text>
<text x="1087" y="244.7" font-size="4.1" fill="#a6a6a6" text-anchor="middle" >BATT1_TX_</text>
<line x1="1060.5" y1="248.5" x2="1109.5" y2="248.5" stroke="#b4b4b4" stroke-width="1"/>
<text x="1059.0" y="249.7" font-size="4.1" fill="#a6a6a6" text-anchor="end" >UART8_VRE</text>
<text x="1111.0" y="249.7" font-size="4.1" fill="#a6a6a6" text-anchor="start" >DIV3_N5_</text>
<text x="1087" y="247.7" font-size="4.1" fill="#a6a6a6" text-anchor="middle" >IN8_MB_BT_I</text>
<line x1="1060.5" y1="250.5" x2="1109.5" y2="250.5" stroke="#b4b4b4" stroke-width="1"/>
<text x="1059.0" y="251.7" font-size="4.1" fill="#a6a6a6" text-anchor="end" >IO_BT_EN_</text>
<text x="1111.0" y="251.7" font-size="4.1" fill="#a6a6a6" text-anchor="start" >MB5_VRE</text>
<text x="1087" y="249.7" font-size="4.1" fill="#a6a6a6" text-anchor="middle" >EN4_BL_TX_</text>
<line x1="1060.5" y1="254.5" x2="1109.5" y2="254.5" stroke="#b4b4b4" stroke-width="1"/>
<text x="1059.0" y="255.7" font-size="4.1" fill="#a6a6a6" text-anchor="end" >SPI_SDC_H</text>
<text x="1111.0" y="255.7" font-size="4.1" fill="#a6a6a6" text-anchor="start" >TP4_SEL7_</text>
<text x="1087" y="253.7" font-size="4.1" fill="#a6a6a6" text-anchor="middle" >SPI_OUT0</text>
<line x1="1060.5" y1="266.5" x2="1109.5" y2="266.5" stroke="#b4b4b4" stroke-width="1"/>
<text x="1059.0" y="267.7" font-size="4.1" fill="#a6a6a6" text-anchor="end" >DRX_TP_RF1</text>
<text x="1111.0" y="267.7" font-size="4.1" fill="#a6a6a6" text-anchor="start" >PWR_RX_CL</text>
<text x="1087" y="265.7" font-size="4.1" fill="#a6a6a6" text-anchor="middle" >RX_BL5_MB</text>
<line x1="1060.5" y1="268.5" x2="1109.5" y2="268.5" stroke="#b4b4b4" stroke-width="1"/>
<text x="1059.0" y="269.7" font-size="4.1" fill="#a6a6a6" text-anchor="end" >DET_MON1</text>
<text x="1111.0" y="269.7" font-size="4.1" fill="#a6a6a6" text-anchor="start" >GPS8_UA</text>
<text x="1087" y="267.7" font-size="4.1" fill="#a6a6a6" text-anchor="middle" >EN5_ANT1_R</text>
<line x1="1060.5" y1="271.5" x2="1109.5" y2="271.5" stroke="#b4b4b4" stroke-width="1"/>
<text x="1059.0" y="272.7" font-size="4.1" fill="#a6a6a6" text-anchor="end" >MBHC_FM7_</text>
<text x="1111.0" y="272.7" font-size="4.1" fill="#a6a6a6" text-anchor="start" >BL_DISP_</text>
<text x="1087" y="270.7" font-size="4.1" fill="#a6a6a6" text-anchor="middle" >INT_SPKR</text>
<line x1="1060.5" y1="276.5" x2="1109.5" y2="276.5" stroke="#b4b4b4" stroke-width="1"/>
<text x="1059.0" y="277.7" font-size="4.1" fill="#a6a6a6" text-anchor="end" >FM_LNA_R</text>
<text x="1111.0" y="277.7" font-size="4.1" fill="#a6a6a6" text-anchor="start" >NFC_DISP_</text>
<text x="1087" y="275.7" font-size="4.1" fill="#a6a6a6" text-anchor="middle" >GPS7_SDC_W</text>
<line x1="1060.5" y1="279.5" x2="1109.5" y2="279.5" stroke="#b4b4b4" stroke-width="1"/>
<text x="1059.0" y="280.7" font-size="4.1" fill="#a6a6a6" text-anchor="end" >LINE4_FM3_</text>
<text x="1111.0" y="280.7" font-size="4.1" fill="#a6a6a6" text-anchor="start" >LDO_RF_</text>
<text x="1087" y="278.7" font-size="4.1" fill="#a6a6a6" text-anchor="middle" >UART9_I2C_</text>
<line x1="1060.5" y1="282.5" x2="1109.5" y2="282.5" stroke="#b4b4b4" stroke-width="1"/>
<text x="1059.0" y="283.7" font-size="4.1" fill="#a6a6a6" text-anchor="end" >PRX7_HPH</text>
<text x="1111.0" y="283.7" font-size="4.1" fill="#a6a6a6" text-anchor="start" >RX_VBUS_M</text>
<text x="1087" y="281.7" font-size="4.1" fill="#a6a6a6" text-anchor="middle" >EN_UIM_PM2</text>
<line x1="1060.5" y1="286.5" x2="1109.5" y2="286.5" stroke="#b4b4b4" stroke-width="1"/>
<text x="1059.0" y="287.7" font-size="4.1" fill="#a6a6a6" text-anchor="end" >MBHC_BT_</text>
<text x="1111.0" y="287.7" font-size="4.1" fill="#a6a6a6" text-anchor="start" >XO_REF_UA</text>
<text x="1087" y="285.7" font-size="4.1" fill="#a6a6a6" text-anchor="middle" >PWR_BATT_</text>
<line x1="1060.5" y1="289.5" x2="1109.5" y2="289.5" stroke="#b4b4b4" stroke-width="1"/>
<text x="1059.0" y="290.7" font-size="4.1" fill="#a6a6a6" text-anchor="end" >VDD4_IN_U</text>
<text x="1111.0" y="290.7" font-size="4.1" fill="#a6a6a6" text-anchor="start" >TP_SIM1_</text>
<text x="1087" y="288.7" font-size="4.1" fill="#a6a6a6" text-anchor="middle" >INT_DET_</text>
<line x1="1060.5" y1="300.5" x2="1109.5" y2="300.5" stroke="#b4b4b4" stroke-width="1"/>
<text x="1059.0" y="301.7" font-size="4.1" fill="#a6a6a6" text-anchor="end" >TX_BT_ANT</text>
<text x="1111.0" y="301.7" font-size="4.1" fill="#a6a6a6" text-anchor="start" >N_REF8_V</text>
<text x="1087" y="299.7" font-size="4.1" fill="#a6a6a6" text-anchor="middle" >WLAN_LDO</text>
<line x1="1060.5" y1="303.5" x2="1109.5" y2="303.5" stroke="#b4b4b4" stroke-width="1"/>
<text x="1059.0" y="304.7" font-size="4.1" fill="#a6a6a6" text-anchor="end" >MIC_I2C_</text>
<text x="1111.0" y="304.7" font-size="4.1" fill="#a6a6a6" text-anchor="start" >MIC_RST1_</text>
<text x="1087" y="302.7" font-size="4.1" fill="#a6a6a6" text-anchor="middle" >RST_N_TE</text>
<line x1="1060.5" y1="306.5" x2="1109.5" y2="306.5" stroke="#b4b4b4" stroke-width="1"/>
<text x="1059.0" y="307.7" font-size="4.1" fill="#a6a6a6" text-anchor="end" >LNA_SPI_WL</text>
<text x="1111.0" y="307.7" font-size="4.1" fill="#a6a6a6" text-anchor="start" >OUT1_RF</text>
<text x="1087" y="305.7" font-size="4.1" fill="#a6a6a6" text-anchor="middle" >SPI_CAM_MBH</text>
<line x1="1060.5" y1="310.5" x2="1109.5" y2="310.5" stroke="#b4b4b4" stroke-width="1"/>
<text x="1059.0" y="311.7" font-size="4.1" fill="#a6a6a6" text-anchor="end" >HPH4_IN8</text>
<text x="1111.0" y="311.7" font-size="4.1" fill="#a6a6a6" text-anchor="start" >IN_RST_O</text>
<text x="1087" y="309.7" font-size="4.1" fill="#a6a6a6" text-anchor="middle" >XO_DRX_PRX</text>
<line x1="1060.5" y1="313.5" x2="1109.5" y2="313.5" stroke="#b4b4b4" stroke-width="1"/>
<text x="1059.0" y="314.7" font-size="4.1" fill="#a6a6a6" text-anchor="end" >SPI_INT_MI</text>
<text x="1111.0" y="314.7" font-size="4.1" fill="#a6a6a6" text-anchor="start" >UIM0_RF2</text>
<text x="1087" y="312.7" font-size="4.1" fill="#a6a6a6" text-anchor="middle" >P_SIM_VBU</text>
<line x1="1060.5" y1="318.5" x2="1109.5" y2="318.5" stroke="#b4b4b4" stroke-width="1"/>
<text x="1059.0" y="319.7" font-size="4.1" fill="#a6a6a6" text-anchor="end" >LDO_EN_N</text>
<text x="1111.0" y="319.7" font-size="4.1" fill="#a6a6a6" text-anchor="start" >HPH6_GP</text>
<text x="1087" y="317.7" font-size="4.1" fill="#a6a6a6" text-anchor="middle" >USB9_BT_HP</text>
<line x1="1060.5" y1="321.5" x2="1109.5" y2="321.5" stroke="#b4b4b4" stroke-width="1"/>
<text x="1059.0" y="322.7" font-size="4.1" fill="#a6a6a6" text-anchor="end" >OUT_PWR3_</text>
<text x="1111.0" y="322.7" font-size="4.1" fill="#a6a6a6" text-anchor="start" >SDC_HPH9</text>
<text x="1087" y="320.7" font-size="4.1" fill="#a6a6a6" text-anchor="middle" >BATT_PRX0</text>
<line x1="1060.5" y1="340.5" x2="1109.5" y2="340.5" stroke="#b4b4b4" stroke-width="1"/>
<text x="1059.0" y="341.7" font-size="4.1" fill="#a6a6a6" text-anchor="end" >PWR1_MIC_</text>
<text x="1111.0" y="341.7" font-size="4.1" fill="#a6a6a6" text-anchor="start" >N3_ANT8_USB_</text>
<text x="1075" y="339.7" font-size="4.1" fill="#a6a6a6" text-anchor="middle" >CLK_WLAN1</text>
<line x1="1060.5" y1="349.5" x2="1085.5" y2="349.5" stroke="#b4b4b4" stroke-width="1"/>
<text x="1059" y="350.7" font-size="4.1" fill="#a6a6a6" text-anchor="end" >NFC_CLK_</text>
<text x="1065" y="348.5" font-size="4.1" fill="#a6a6a6" text-anchor="start" >HPH_EN_AUD</text>
<line x1="1085.5" y1="349.5" x2="1085.5" y2="513.3" stroke="#b4b4b4" stroke-width="1"/>
<line x1="1085.5" y1="513.5" x2="1239.5" y2="513.5" stroke="#b4b4b4" stroke-width="1"/>
<text x="1241" y="514.5" font-size="4.1" fill="#a6a6a6" text-anchor="start" >IN_HB_LI</text>
<line x1="767.5" y1="431.5" x2="1109.5" y2="431.5" stroke="#b4b4b4" stroke-width="1"/>
<text x="766.0" y="432.7" font-size="4.1" fill="#a6a6a6" text-anchor="end" >MIPI_LDO_</text>
<text x="1111.0" y="432.7" font-size="4.1" fill="#a6a6a6" text-anchor="start" >INT_IO5_H</text>
<text x="925" y="430.7" font-size="4.1" fill="#a6a6a6" text-anchor="middle" >RST_SPKR_</text>
<circle cx="809.5" cy="431.5" r="0.9" fill="#555"/>
<circle cx="1085.5" cy="431.5" r="0.9" fill="#666"/>
<line x1="767.5" y1="434.5" x2="1109.5" y2="434.5" stroke="#b4b4b4" stroke-width="1"/>
<text x="766.0" y="435.7" font-size="4.1" fill="#a6a6a6" text-anchor="end" >EAR_EAR_L</text>
<text x="1111.0" y="435.7" font-size="4.1" fill="#a6a6a6" text-anchor="start" >REF4_RST_</text>
<text x="925" y="433.7" font-size="4.1" fill="#a6a6a6" text-anchor="middle" >REF0_UART</text>
<circle cx="809.5" cy="434.5" r="0.9" fill="#555"/>
<circle cx="1085.5" cy="434.5" r="0.9" fill="#666"/>
<line x1="767.5" y1="437.5" x2="1109.5" y2="437.5" stroke="#b4b4b4" stroke-width="1"/>
<text x="766.0" y="438.7" font-size="4.1" fill="#a6a6a6" text-anchor="end" >DRX8_LNA_</text>
<text x="1111.0" y="438.7" font-size="4.1" fill="#a6a6a6" text-anchor="start" >BL_IN3_CA</text>
<text x="925" y="436.7" font-size="4.1" fill="#a6a6a6" text-anchor="middle" >VBUS_N_IN</text>
<circle cx="809.5" cy="437.5" r="0.9" fill="#555"/>
<circle cx="1085.5" cy="437.5" r="0.9" fill="#666"/>
<line x1="767.5" y1="440.5" x2="1109.5" y2="440.5" stroke="#b4b4b4" stroke-width="1"/>
<text x="766.0" y="441.7" font-size="4.1" fill="#a6a6a6" text-anchor="end" >CTRL_AUD_</text>
<text x="1111.0" y="441.7" font-size="4.1" fill="#a6a6a6" text-anchor="start" >LB_SIM_MI</text>
<text x="925" y="439.7" font-size="4.1" fill="#a6a6a6" text-anchor="middle" >N9_GPS_AU</text>
<circle cx="809.5" cy="440.5" r="0.9" fill="#555"/>
<circle cx="1085.5" cy="440.5" r="0.9" fill="#666"/>
<line x1="767.5" y1="449.5" x2="1109.5" y2="449.5" stroke="#b4b4b4" stroke-width="1"/>
<text x="766.0" y="450.7" font-size="4.1" fill="#a6a6a6" text-anchor="end" >GPS_EN_CA</text>
<text x="1111.0" y="450.7" font-size="4.1" fill="#a6a6a6" text-anchor="start" >PM_LB5_GP</text>
<text x="925" y="448.7" font-size="4.1" fill="#a6a6a6" text-anchor="middle" >HPH9_DIV_</text>
<circle cx="809.5" cy="449.5" r="0.9" fill="#555"/>
<circle cx="1085.5" cy="449.5" r="0.9" fill="#666"/>
<line x1="767.5" y1="452.5" x2="1109.5" y2="452.5" stroke="#b4b4b4" stroke-width="1"/>
<text x="766.0" y="453.7" font-size="4.1" fill="#a6a6a6" text-anchor="end" >INT_EAR_P</text>
<text x="1111.0" y="453.7" font-size="4.1" fill="#a6a6a6" text-anchor="start" >ANT_BATT7</text>
<text x="925" y="451.7" font-size="4.1" fill="#a6a6a6" text-anchor="middle" >SDC_PM_EA</text>
<circle cx="809.5" cy="452.5" r="0.9" fill="#555"/>
<circle cx="1085.5" cy="452.5" r="0.9" fill="#666"/>
<line x1="767.5" y1="455.5" x2="1109.5" y2="455.5" stroke="#b4b4b4" stroke-width="1"/>
<text x="766.0" y="456.7" font-size="4.1" fill="#a6a6a6" text-anchor="end" >LB_LINE2_</text>
<text x="1111.0" y="456.7" font-size="4.1" fill="#a6a6a6" text-anchor="start" >USB_GPS5_</text>
<text x="925" y="454.7" font-size="4.1" fill="#a6a6a6" text-anchor="middle" >CTRL_WLAN</text>
<circle cx="809.5" cy="455.5" r="0.9" fill="#555"/>
<circle cx="1085.5" cy="455.5" r="0.9" fill="#666"/>
<line x1="767.5" y1="458.5" x2="1109.5" y2="458.5" stroke="#b4b4b4" stroke-width="1"/>
<text x="766.0" y="459.7" font-size="4.1" fill="#a6a6a6" text-anchor="end" >UART_OUT_</text>
<text x="1111.0" y="459.7" font-size="4.1" fill="#a6a6a6" text-anchor="start" >GPIO_GPS9</text>
<text x="925" y="457.7" font-size="4.1" fill="#a6a6a6" text-anchor="middle" >SIM_LB5_M</text>
<circle cx="809.5" cy="458.5" r="0.9" fill="#555"/>
<circle cx="1085.5" cy="458.5" r="0.9" fill="#666"/>
<line x1="767.5" y1="461.5" x2="1109.5" y2="461.5" stroke="#b4b4b4" stroke-width="1"/>
<text x="766.0" y="462.7" font-size="4.1" fill="#a6a6a6" text-anchor="end" >VREG_CAM7</text>
<text x="1111.0" y="462.7" font-size="4.1" fill="#a6a6a6" text-anchor="start" >VREG0_USB</text>
<text x="925" y="460.7" font-size="4.1" fill="#a6a6a6" text-anchor="middle" >GPS_BATT8</text>
<circle cx="809.5" cy="461.5" r="0.9" fill="#555"/>
<circle cx="1085.5" cy="461.5" r="0.9" fill="#666"/>
<line x1="767.5" y1="476.5" x2="790" y2="476.5" stroke="#b4b4b4" stroke-width="1"/>
<text x="766.0" y="477.7" font-size="4.1" fill="#a6a6a6" text-anchor="end" >I2C_DIV1_M</text>
<rect x="790.5" y="475.0" width="3" height="3" fill="#fff" stroke="#888" stroke-width="0.8"/>
<line x1="767.5" y1="479.5" x2="1109.5" y2="479.5" stroke="#b4b4b4" stroke-width="1"/>
<text x="766.0" y="480.7" font-size="4.1" fill="#a6a6a6" text-anchor="end" >RST8_PA3_S</text>
<text x="1111.0" y="480.7" font-size="4.1" fill="#a6a6a6" text-anchor="start" >BL2_N4_BL</text>
<text x="925" y="478.7" font-size="4.1" fill="#a6a6a6" text-anchor="middle" >UART_MIC_M</text>
<circle cx="809.5" cy="479.5" r="0.9" fill="#555"/>
<circle cx="1085.5" cy="479.5" r="0.9" fill="#666"/>
<line x1="767.5" y1="495.5" x2="1239.5" y2="495.5" stroke="#b4b4b4" stroke-width="1"/>
<text x="766.0" y="496.7" font-size="4.1" fill="#a6a6a6" text-anchor="end" >CAM_DET9_N_O</text>
<text x="1241.0" y="496.7" font-size="4.1" fill="#a6a6a6" text-anchor="start" >UIM2_UART4_UIM</text>
<text x="975" y="494.7" font-size="4.1" fill="#a6a6a6" text-anchor="middle" >BATT4_MON_C</text>
<circle cx="809.5" cy="495.5" r="0.9" fill="#555"/>
<circle cx="1085.5" cy="495.5" r="0.9" fill="#666"/>
<line x1="767.5" y1="498.5" x2="1239.5" y2="498.5" stroke="#b4b4b4" stroke-width="1"/>
<text x="766.0" y="499.7" font-size="4.1" fill="#a6a6a6" text-anchor="end" >DET6_DISP_VB</text>
<text x="1241.0" y="499.7" font-size="4.1" fill="#a6a6a6" text-anchor="start" >PRX7_CTRL_SDC_</text>
<text x="975" y="497.7" font-size="4.1" fill="#a6a6a6" text-anchor="middle" >MB_SDC9_DIS</text>
<circle cx="809.5" cy="498.5" r="0.9" fill="#555"/>
<circle cx="1085.5" cy="498.5" r="0.9" fill="#666"/>
<line x1="767.5" y1="504.5" x2="1239.5" y2="504.5" stroke="#b4b4b4" stroke-width="1"/>
<text x="766.0" y="505.7" font-size="4.1" fill="#a6a6a6" text-anchor="end" >LNA_LB2_CAM_</text>
<text x="1241.0" y="505.7" font-size="4.1" fill="#a6a6a6" text-anchor="start" >I2C0_LINE8_IN_</text>
<text x="975" y="503.7" font-size="4.1" fill="#a6a6a6" text-anchor="middle" >DISP1_VDD7_</text>
<circle cx="809.5" cy="504.5" r="0.9" fill="#555"/>
<circle cx="1085.5" cy="504.5" r="0.9" fill="#666"/>
<line x1="1184.5" y1="437.5" x2="1239.5" y2="437.5" stroke="#b4b4b4" stroke-width="1"/>
<text x="1183.0" y="438.7" font-size="4.1" fill="#a6a6a6" text-anchor="end" >VREG_ISN</text>
<text x="1241.0" y="438.7" font-size="4.1" fill="#a6a6a6" text-anchor="start" >AUD9_BT5</text>
<text x="1212" y="436.7" font-size="4.1" fill="#a6a6a6" text-anchor="middle" >GPS0_I</text>
<line x1="1184.5" y1="445.5" x2="1239.5" y2="445.5" stroke="#b4b4b4" stroke-width="1"/>
<text x="1183.0" y="446.7" font-size="4.1" fill="#a6a6a6" text-anchor="end" >LNA_SIM_</text>
<text x="1241.0" y="446.7" font-size="4.1" fill="#a6a6a6" text-anchor="start" >TE_IO6_T</text>
<text x="1212" y="444.7" font-size="4.1" fill="#a6a6a6" text-anchor="middle" >RF_DIV</text>
<line x1="1184.5" y1="461.5" x2="1239.5" y2="461.5" stroke="#b4b4b4" stroke-width="1"/>
<text x="1183.0" y="462.7" font-size="4.1" fill="#a6a6a6" text-anchor="end" >OUT_MBHC</text>
<text x="1241.0" y="462.7" font-size="4.1" fill="#a6a6a6" text-anchor="start" >DRX_GPIO</text>
<text x="1212" y="460.7" font-size="4.1" fill="#a6a6a6" text-anchor="middle" >DATA0_</text>
<line x1="1184.5" y1="469.5" x2="1239.5" y2="469.5" stroke="#b4b4b4" stroke-width="1"/>
<text x="1183.0" y="470.7" font-size="4.1" fill="#a6a6a6" text-anchor="end" >VDD_DRX_</text>
<text x="1241.0" y="470.7" font-size="4.1" fill="#a6a6a6" text-anchor="start" >MON0_TX_</text>
<text x="1212" y="468.7" font-size="4.1" fill="#a6a6a6" text-anchor="middle" >IO0_DI</text>
<line x1="1184.5" y1="472.5" x2="1239.5" y2="472.5" stroke="#b4b4b4" stroke-width="1"/>
<text x="1183.0" y="473.7" font-size="4.1" fill="#a6a6a6" text-anchor="end" >LB_RX_TX</text>
<text x="1241.0" y="473.7" font-size="4.1" fill="#a6a6a6" text-anchor="start" >TE_GPS_U</text>
<text x="1212" y="471.7" font-size="4.1" fill="#a6a6a6" text-anchor="middle" >PM_SPI</text>
<line x1="1046.5" y1="524.4" x2="1046.5" y2="597.8" stroke="#b4b4b4" stroke-width="1"/>
<line x1="1046.3" y1="524.5" x2="1239.5" y2="524.5" stroke="#b4b4b4" stroke-width="1"/>
<text x="1241" y="525.6" font-size="4.1" fill="#a6a6a6" text-anchor="start" >CLK9_HB</text>
<text x="1225" y="523" font-size="4.1" fill="#a6a6a6" text-anchor="middle" >FM6_RE</text>
<line x1="906.5" y1="597.5" x2="1046.3" y2="597.5" stroke="#b4b4b4" stroke-width="1"/>
<text x="905" y="599" font-size="4.1" fill="#a6a6a6" text-anchor="end" >I2C3_S</text>
<text x="922" y="596.5" font-size="4.1" fill="#a6a6a6" text-anchor="middle" >DRX_OU</text>
<line x1="906.5" y1="633.5" x2="949" y2="633.5" stroke="#b4b4b4" stroke-width="1"/>
<circle cx="950.5" cy="633.5" r="1.6" fill="#fff" stroke="#888" stroke-width="0.8"/>
<text x="905" y="634.8" font-size="4.1" fill="#a6a6a6" text-anchor="end" >UART0_SDC_</text>
<text x="955" y="634.3" font-size="4.1" fill="#a6a6a6" text-anchor="start" >RF_UIM_BATT</text>
<line x1="767.5" y1="582.5" x2="819.5" y2="582.5" stroke="#b4b4b4" stroke-width="1"/>
<text x="766.0" y="583.7" font-size="4.1" fill="#a6a6a6" text-anchor="end" >BT_EN_SPK</text>
<text x="821.0" y="583.7" font-size="4.1" fill="#a6a6a6" text-anchor="start" >RF_PM_LB_C</text>
<text x="787" y="581.7" font-size="4.1" fill="#a6a6a6" text-anchor="middle" >LB_N_BL</text>
<line x1="767.5" y1="585.5" x2="819.5" y2="585.5" stroke="#b4b4b4" stroke-width="1"/>
<text x="766.0" y="586.7" font-size="4.1" fill="#a6a6a6" text-anchor="end" >ISNS3_REF_</text>
<text x="821.0" y="586.7" font-size="4.1" fill="#a6a6a6" text-anchor="start" >DET_EN_SDC_S</text>
<text x="787" y="584.7" font-size="4.1" fill="#a6a6a6" text-anchor="middle" >REF6_C</text>
<line x1="767.5" y1="588.5" x2="819.5" y2="588.5" stroke="#b4b4b4" stroke-width="1"/>
<text x="766.0" y="589.7" font-size="4.1" fill="#a6a6a6" text-anchor="end" >SPI_SDC_M</text>
<text x="821.0" y="589.7" font-size="4.1" fill="#a6a6a6" text-anchor="start" >DATA_TX9_V</text>
<text x="787" y="587.7" font-size="4.1" fill="#a6a6a6" text-anchor="middle" >NFC_LDO_</text>
<line x1="767.5" y1="594.5" x2="819.5" y2="594.5" stroke="#808080" stroke-width="1"/>
<text x="766.0" y="595.7" font-size="4.1" fill="#a6a6a6" text-anchor="end" >DRX_BATT_</text>
<text x="821.0" y="595.7" font-size="4.1" fill="#a6a6a6" text-anchor="start" >INT_CLK_DRX8</text>
<text x="787" y="593.7" font-size="4.1" fill="#a6a6a6" text-anchor="middle" >IN9_HPH_</text>
<line x1="767.5" y1="600.5" x2="819.5" y2="600.5" stroke="#b4b4b4" stroke-width="1"/>
<text x="766.0" y="601.7" font-size="4.1" fill="#a6a6a6" text-anchor="end" >N9_VREG_LN</text>
<text x="821.0" y="601.7" font-size="4.1" fill="#a6a6a6" text-anchor="start" >RX_IO6_VB</text>
<text x="787" y="599.7" font-size="4.1" fill="#a6a6a6" text-anchor="middle" >MIC_INT_N</text>
<line x1="767.5" y1="603.5" x2="819.5" y2="603.5" stroke="#b4b4b4" stroke-width="1"/>
<text x="766.0" y="604.7" font-size="4.1" fill="#a6a6a6" text-anchor="end" >ANT_ANT_</text>
<text x="821.0" y="604.7" font-size="4.1" fill="#a6a6a6" text-anchor="start" >TE9_USB0_</text>
<text x="787" y="602.7" font-size="4.1" fill="#a6a6a6" text-anchor="middle" >CTRL_ISNS0</text>
<line x1="767.5" y1="609.5" x2="819.5" y2="609.5" stroke="#b4b4b4" stroke-width="1"/>
<text x="766.0" y="610.7" font-size="4.1" fill="#a6a6a6" text-anchor="end" >CAM_AUD_EN</text>
<text x="821.0" y="610.7" font-size="4.1" fill="#a6a6a6" text-anchor="start" >BT_HPH_</text>
<text x="787" y="608.7" font-size="4.1" fill="#a6a6a6" text-anchor="middle" >P7_LINE_PR</text>
<line x1="767.5" y1="612.5" x2="819.5" y2="612.5" stroke="#b4b4b4" stroke-width="1"/>
<text x="766.0" y="613.7" font-size="4.1" fill="#a6a6a6" text-anchor="end" >SDC_SPKR5</text>
<text x="821.0" y="613.7" font-size="4.1" fill="#a6a6a6" text-anchor="start" >TE_TX2_L</text>
<text x="787" y="611.7" font-size="4.1" fill="#a6a6a6" text-anchor="middle" >VBUS5_XO_E</text>
<line x1="767.5" y1="618.5" x2="819.5" y2="618.5" stroke="#808080" stroke-width="1"/>
<text x="766.0" y="619.7" font-size="4.1" fill="#a6a6a6" text-anchor="end" >BT7_MON_S</text>
<text x="821.0" y="619.7" font-size="4.1" fill="#a6a6a6" text-anchor="start" >LDO_N_DR</text>
<text x="787" y="617.7" font-size="4.1" fill="#a6a6a6" text-anchor="middle" >MIPI_VBUS</text>
<line x1="767.5" y1="627.5" x2="819.5" y2="627.5" stroke="#b4b4b4" stroke-width="1"/>
<text x="766.0" y="628.7" font-size="4.1" fill="#a6a6a6" text-anchor="end" >LDO_RF9_PWR</text>
<text x="821.0" y="628.7" font-size="4.1" fill="#a6a6a6" text-anchor="start" >MIPI_P_VREG</text>
<text x="787" y="626.7" font-size="4.1" fill="#a6a6a6" text-anchor="middle" >AUD0_WLAN</text>
<circle cx="769.5" cy="627.5" r="1.6" fill="#fff" stroke="#888" stroke-width="0.8"/>
<rect x="816.0" y="626.0" width="3" height="3" fill="#fff" stroke="#888" stroke-width="0.8"/>
<line x1="767.5" y1="630.5" x2="819.5" y2="630.5" stroke="#b4b4b4" stroke-width="1"/>
<text x="766.0" y="631.7" font-size="4.1" fill="#a6a6a6" text-anchor="end" >BATT5_MI</text>
<text x="821.0" y="631.7" font-size="4.1" fill="#a6a6a6" text-anchor="start" >PWR1_INT_</text>
<text x="787" y="629.7" font-size="4.1" fill="#a6a6a6" text-anchor="middle" >DATA9_BL</text>
<line x1="767.5" y1="633.5" x2="819.5" y2="633.5" stroke="#b4b4b4" stroke-width="1"/>
<text x="766.0" y="634.7" font-size="4.1" fill="#a6a6a6" text-anchor="end" >TP_PA7_LNA_</text>
<text x="821.0" y="634.7" font-size="4.1" fill="#a6a6a6" text-anchor="start" >SIM0_AUD</text>
<text x="787" y="632.7" font-size="4.1" fill="#a6a6a6" text-anchor="middle" >SEL_PM_LN</text>
<line x1="767.5" y1="636.5" x2="819.5" y2="636.5" stroke="#b4b4b4" stroke-width="1"/>
<text x="766.0" y="637.7" font-size="4.1" fill="#a6a6a6" text-anchor="end" >ISNS_SPI_D</text>
<text x="821.0" y="637.7" font-size="4.1" fill="#a6a6a6" text-anchor="start" >SEL_NFC1_USB</text>
<text x="787" y="635.7" font-size="4.1" fill="#a6a6a6" text-anchor="middle" >HPH_PA_M</text>
<line x1="767.5" y1="639.5" x2="819.5" y2="639.5" stroke="#b4b4b4" stroke-width="1"/>
<text x="766.0" y="640.7" font-size="4.1" fill="#a6a6a6" text-anchor="end" >ANT_GPIO_BL</text>
<text x="821.0" y="640.7" font-size="4.1" fill="#a6a6a6" text-anchor="start" >CTRL_RX_I</text>
<text x="787" y="638.7" font-size="4.1" fill="#a6a6a6" text-anchor="middle" >DRX_DR</text>
<line x1="767.5" y1="642.5" x2="819.5" y2="642.5" stroke="#b4b4b4" stroke-width="1"/>
<text x="766.0" y="643.7" font-size="4.1" fill="#a6a6a6" text-anchor="end" >N_OUT_A</text>
<text x="821.0" y="643.7" font-size="4.1" fill="#a6a6a6" text-anchor="start" >PRX_PM3_RE</text>
<text x="787" y="641.7" font-size="4.1" fill="#a6a6a6" text-anchor="middle" >EN_USB_</text>
<line x1="767.5" y1="645.5" x2="819.5" y2="645.5" stroke="#b4b4b4" stroke-width="1"/>
<text x="766.0" y="646.7" font-size="4.1" fill="#a6a6a6" text-anchor="end" >BATT3_VBUS5</text>
<text x="821.0" y="646.7" font-size="4.1" fill="#a6a6a6" text-anchor="start" >MIPI_MO</text>
<text x="787" y="644.7" font-size="4.1" fill="#a6a6a6" text-anchor="middle" >CTRL2_E</text>
<circle cx="769.5" cy="645.5" r="1.6" fill="#fff" stroke="#888" stroke-width="0.8"/>
<rect x="816.0" y="644.0" width="3" height="3" fill="#fff" stroke="#888" stroke-width="0.8"/>
<line x1="767.5" y1="648.5" x2="811" y2="648.5" stroke="#b4b4b4" stroke-width="1"/>
<text x="766.0" y="649.7" font-size="4.1" fill="#a6a6a6" text-anchor="end" >IO_BL2_SPKR_</text>
<text x="790" y="647.7" font-size="4.1" fill="#a6a6a6" text-anchor="middle" >UIM_FM_DET2_</text>
<circle cx="812.5" cy="648.5" r="1.4" fill="#fff" stroke="#888" stroke-width="0.8"/>
<line x1="767.5" y1="651.5" x2="811" y2="651.5" stroke="#b4b4b4" stroke-width="1"/>
<text x="766.0" y="652.7" font-size="4.1" fill="#a6a6a6" text-anchor="end" >IO9_VDD3_N4_</text>
<text x="790" y="650.7" font-size="4.1" fill="#a6a6a6" text-anchor="middle" >FM1_CTRL_CTR</text>
<circle cx="812.5" cy="651.5" r="1.4" fill="#fff" stroke="#888" stroke-width="0.8"/>
<text x="808" y="596" font-size="4.1" fill="#a6a6a6" text-anchor="end" >OUT_MB6_MB_U</text>
<line x1="767.5" y1="694.5" x2="819.5" y2="694.5" stroke="#b4b4b4" stroke-width="1"/>
<text x="766.0" y="695.7" font-size="4.1" fill="#a6a6a6" text-anchor="end" >BT_BT_F</text>
<text x="821.0" y="695.7" font-size="4.1" fill="#a6a6a6" text-anchor="start" >SEL_PWR</text>
<text x="790" y="693.7" font-size="4.1" fill="#a6a6a6" text-anchor="middle" >MB_SEL</text>
<line x1="767.5" y1="697.5" x2="819.5" y2="697.5" stroke="#b4b4b4" stroke-width="1"/>
<text x="766.0" y="698.7" font-size="4.1" fill="#a6a6a6" text-anchor="end" >MB_LDO_I</text>
<text x="821.0" y="698.7" font-size="4.1" fill="#a6a6a6" text-anchor="start" >FM_SIM_FM_</text>
<text x="790" y="696.7" font-size="4.1" fill="#a6a6a6" text-anchor="middle" >EAR1_RS</text>
<line x1="767.5" y1="700.5" x2="819.5" y2="700.5" stroke="#808080" stroke-width="1"/>
<text x="766.0" y="701.7" font-size="4.1" fill="#a6a6a6" text-anchor="end" >EAR_RST</text>
<text x="821.0" y="701.7" font-size="4.1" fill="#a6a6a6" text-anchor="start" >CLK_XO_</text>
<text x="790" y="699.7" font-size="4.1" fill="#a6a6a6" text-anchor="middle" >SDC3_RX</text>
<line x1="767.5" y1="703.5" x2="819.5" y2="703.5" stroke="#b4b4b4" stroke-width="1"/>
<text x="766.0" y="704.7" font-size="4.1" fill="#a6a6a6" text-anchor="end" >LDO8_TE</text>
<text x="821.0" y="704.7" font-size="4.1" fill="#a6a6a6" text-anchor="start" >RST_ISNS_FM</text>
<text x="790" y="702.7" font-size="4.1" fill="#a6a6a6" text-anchor="middle" >MIPI_CA</text>
<circle cx="769.5" cy="703.5" r="1.6" fill="#fff" stroke="#888" stroke-width="0.8"/>
<rect x="816.0" y="702.0" width="3" height="3" fill="#fff" stroke="#888" stroke-width="0.8"/>
<line x1="767.5" y1="715.5" x2="819.5" y2="715.5" stroke="#b4b4b4" stroke-width="1"/>
<text x="766.0" y="716.7" font-size="4.1" fill="#a6a6a6" text-anchor="end" >SIM_ANT</text>
<text x="821.0" y="716.7" font-size="4.1" fill="#a6a6a6" text-anchor="start" >INT_MON_OU</text>
<text x="790" y="714.7" font-size="4.1" fill="#a6a6a6" text-anchor="middle" >LINE_BATT4</text>
<line x1="767.5" y1="739.5" x2="819.5" y2="739.5" stroke="#b4b4b4" stroke-width="1"/>
<text x="766.0" y="740.7" font-size="4.1" fill="#a6a6a6" text-anchor="end" >CTRL_SIM</text>
<text x="821.0" y="740.7" font-size="4.1" fill="#a6a6a6" text-anchor="start" >UART_UA</text>
<text x="790" y="738.7" font-size="4.1" fill="#a6a6a6" text-anchor="middle" >UIM_DRX</text>
<line x1="767.5" y1="742.5" x2="819.5" y2="742.5" stroke="#b4b4b4" stroke-width="1"/>
<text x="766.0" y="743.7" font-size="4.1" fill="#a6a6a6" text-anchor="end" >SEL9_RST7</text>
<text x="821.0" y="743.7" font-size="4.1" fill="#a6a6a6" text-anchor="start" >PRX0_TX_</text>
<text x="790" y="741.7" font-size="4.1" fill="#a6a6a6" text-anchor="middle" >FM7_DET_C</text>
<line x1="767.5" y1="745.5" x2="819.5" y2="745.5" stroke="#b4b4b4" stroke-width="1"/>
<text x="766.0" y="746.7" font-size="4.1" fill="#a6a6a6" text-anchor="end" >DATA_XO0</text>
<text x="821.0" y="746.7" font-size="4.1" fill="#a6a6a6" text-anchor="start" >UART0_CTRL4</text>
<text x="790" y="744.7" font-size="4.1" fill="#a6a6a6" text-anchor="middle" >HB_CTRL6</text>
<line x1="767.5" y1="748.5" x2="819.5" y2="748.5" stroke="#b4b4b4" stroke-width="1"/>
<text x="766.0" y="749.7" font-size="4.1" fill="#a6a6a6" text-anchor="end" >REF_HB_R</text>
<text x="821.0" y="749.7" font-size="4.1" fill="#a6a6a6" text-anchor="start" >GPS7_ANT_R</text>
<text x="790" y="747.7" font-size="4.1" fill="#a6a6a6" text-anchor="middle" >SEL_DAT</text>
<line x1="767.5" y1="754.5" x2="819.5" y2="754.5" stroke="#b4b4b4" stroke-width="1"/>
<text x="766.0" y="755.7" font-size="4.1" fill="#a6a6a6" text-anchor="end" >RF_ANT_P</text>
<text x="821.0" y="755.7" font-size="4.1" fill="#a6a6a6" text-anchor="start" >WLAN_VR</text>
<text x="790" y="753.7" font-size="4.1" fill="#a6a6a6" text-anchor="middle" >OUT7_N_N7</text>
<line x1="767.5" y1="757.5" x2="819.5" y2="757.5" stroke="#b4b4b4" stroke-width="1"/>
<text x="766.0" y="758.7" font-size="4.1" fill="#a6a6a6" text-anchor="end" >SEL_HB0_D</text>
<text x="821.0" y="758.7" font-size="4.1" fill="#a6a6a6" text-anchor="start" >INT_CLK</text>
<text x="790" y="756.7" font-size="4.1" fill="#a6a6a6" text-anchor="middle" >LINE5_</text>
<line x1="767.5" y1="760.5" x2="819.5" y2="760.5" stroke="#b4b4b4" stroke-width="1"/>
<text x="766.0" y="761.7" font-size="4.1" fill="#a6a6a6" text-anchor="end" >SPKR4_CT</text>
<text x="821.0" y="761.7" font-size="4.1" fill="#a6a6a6" text-anchor="start" >EN7_SIM</text>
<text x="790" y="759.7" font-size="4.1" fill="#a6a6a6" text-anchor="middle" >LINE_PA8_C</text>
<line x1="767.5" y1="763.5" x2="819.5" y2="763.5" stroke="#b4b4b4" stroke-width="1"/>
<text x="766.0" y="764.7" font-size="4.1" fill="#a6a6a6" text-anchor="end" >LDO_PA_VD</text>
<text x="821.0" y="764.7" font-size="4.1" fill="#a6a6a6" text-anchor="start" >LINE_OU</text>
<text x="790" y="762.7" font-size="4.1" fill="#a6a6a6" text-anchor="middle" >HB_SPI_M</text>
<line x1="806" y1="708.5" x2="819.5" y2="708.5" stroke="#aaa" stroke-width="1"/>
<circle cx="805" cy="708.5" r="1.4" fill="#fff" stroke="#888" stroke-width="0.8"/>
<text x="820.5" y="709.7" font-size="4.1" fill="#a6a6a6" text-anchor="start" >ANT2_RX6_I2</text>
<text x="785" y="709.5" font-size="4.1" fill="#a6a6a6" text-anchor="middle" >VBUS4_MIC_E</text>
<line x1="806" y1="711.5" x2="819.5" y2="711.5" stroke="#aaa" stroke-width="1"/>
<circle cx="805" cy="711.5" r="1.4" fill="#fff" stroke="#888" stroke-width="0.8"/>
<text x="820.5" y="712.7" font-size="4.1" fill="#a6a6a6" text-anchor="start" >REF2_HB2_CL</text>
<text x="785" y="712.5" font-size="4.1" fill="#a6a6a6" text-anchor="middle" >PRX_EN2_XO_</text>
<line x1="784" y1="721.5" x2="819.5" y2="721.5" stroke="#aaa" stroke-width="1"/>
<circle cx="783" cy="721.5" r="1.4" fill="#fff" stroke="#888" stroke-width="0.8"/>
<text x="820.5" y="722.7" font-size="4.1" fill="#a6a6a6" text-anchor="start" >HPH_TX_</text>
<text x="800" y="720.9" font-size="4.1" fill="#a6a6a6" text-anchor="middle" >SEL6_MBHC</text>
<line x1="784" y1="724.5" x2="819.5" y2="724.5" stroke="#aaa" stroke-width="1"/>
<circle cx="783" cy="724.5" r="1.4" fill="#fff" stroke="#888" stroke-width="0.8"/>
<text x="820.5" y="725.7" font-size="4.1" fill="#a6a6a6" text-anchor="start" >VBUS0_L</text>
<text x="800" y="723.9" font-size="4.1" fill="#a6a6a6" text-anchor="middle" >HB_MIC_EN</text>
<rect x="1152.5" y="749.5" width="224" height="63" fill="none" stroke="#777"/>
<line x1="1246.5" y1="749.5" x2="1246.5" y2="812.5" stroke="#777" stroke-width="1"/>
<line x1="1152.5" y1="763.5" x2="1376.5" y2="763.5" stroke="#777" stroke-width="1"/>
<line x1="1152.5" y1="770.5" x2="1246.5" y2="770.5" stroke="#777" stroke-width="1"/>
<line x1="1152.5" y1="787.5" x2="1376.5" y2="787.5" stroke="#777" stroke-width="1"/>
<line x1="1246.5" y1="800.5" x2="1376.5" y2="800.5" stroke="#777" stroke-width="1"/>
<line x1="1253.5" y1="787.5" x2="1253.5" y2="800.5" stroke="#777" stroke-width="1"/>
<line x1="1355.5" y1="787.5" x2="1355.5" y2="800.5" stroke="#777" stroke-width="1"/>
<line x1="1334.5" y1="800.5" x2="1334.5" y2="812.5" stroke="#777" stroke-width="1"/>
<line x1="1162" y1="791.5" x2="1243" y2="791.5" stroke="#bbb" stroke-width="0.6"/>
<text x="1258" y="751.5" font-size="3.3" fill="#888" text-anchor="middle" textLength="172">MOTOROLA MOBILITY CONFIDENTIAL RESTRICTED AND TRADE SECRET PROPRIETARY</text>
<text x="1193" y="757.5" font-size="3.4" fill="#999" text-anchor="middle" >NOTEBOOK</text>
<circle cx="1273" cy="755.5" r="3" fill="none" stroke="#888" stroke-width="0.9"/><path d="M1271 757l1-3 1 2 1-2 1 3" stroke="#777" stroke-width="0.7" fill="none"/>
<text x="1278" y="758" font-size="6.5" fill="#999" text-anchor="start" textLength="44">MOTOROLA</text>
<text x="1292" y="761.8" font-size="3.3" fill="#999" text-anchor="middle" >MOBILE DEVICES</text>
<text x="1156" y="768" font-size="3.5" fill="#888" text-anchor="start" textLength="64">ENGINEER: MOTOROLA MOBILITY</text>
<text x="1156" y="776.5" font-size="3.5" fill="#888" text-anchor="start" textLength="72">LAST MODIFIED BY: . NATE CIMBALL</text>
<text x="1157" y="782.5" font-size="3.5" fill="#888" text-anchor="start" textLength="60">Thu May 11 14:27:49 2015</text>
<text x="1249" y="769.5" font-size="3.3" fill="#999" text-anchor="start" >BLOCK TITLE:</text>
<text x="1268" y="781" font-size="8.4" fill="#555" text-anchor="start" textLength="39.5">84016407</text>
<text x="1198" y="789.8" font-size="3.2" fill="#888" text-anchor="middle" textLength="65">MOTOROLA CONFIDENTIAL RESTRICTED</text>
<text x="1196" y="795" font-size="2.6" fill="#aaa" text-anchor="middle" textLength="52">IO2_IN_PWR6_MBHC_MIPI_USB8_P</text>
<text x="1196" y="798" font-size="2.6" fill="#aaa" text-anchor="middle" textLength="52">UIM2_DIV_UIM4_VBUS6_UIM_REF1</text>
<text x="1196" y="801" font-size="2.6" fill="#aaa" text-anchor="middle" textLength="52">UART_SDC6_MB_MB_BT3_XO_CLK8_</text>
<text x="1196" y="804" font-size="2.6" fill="#aaa" text-anchor="middle" textLength="52">DISP_TE_TX_SEL_LINE_BT4_WLAN</text>
<text x="1196" y="807.5" font-size="2.6" fill="#aaa" text-anchor="middle" textLength="32">DIV_BL_RST_FM_MI</text>
<text x="1251" y="796" font-size="5" fill="#777" text-anchor="middle" >D</text>
<text x="1259" y="790" font-size="3.2" fill="#999" text-anchor="start" >DOCUMENT NAME</text>
<text x="1258" y="796.5" font-size="3.5" fill="#888" text-anchor="start" >84016407.cpm</text>
<text x="1365" y="790" font-size="3.2" fill="#999" text-anchor="middle" >REV</text>
<text x="1365" y="796.5" font-size="3.5" fill="#888" text-anchor="middle" >01</text>
<text x="1248" y="804" font-size="3" fill="#aaa" text-anchor="start" >CAD FILE NAME</text>
<text x="1350" y="807" font-size="3" fill="#999" text-anchor="middle" >PAGE 1 OF 47</text>
</svg></body></html>
